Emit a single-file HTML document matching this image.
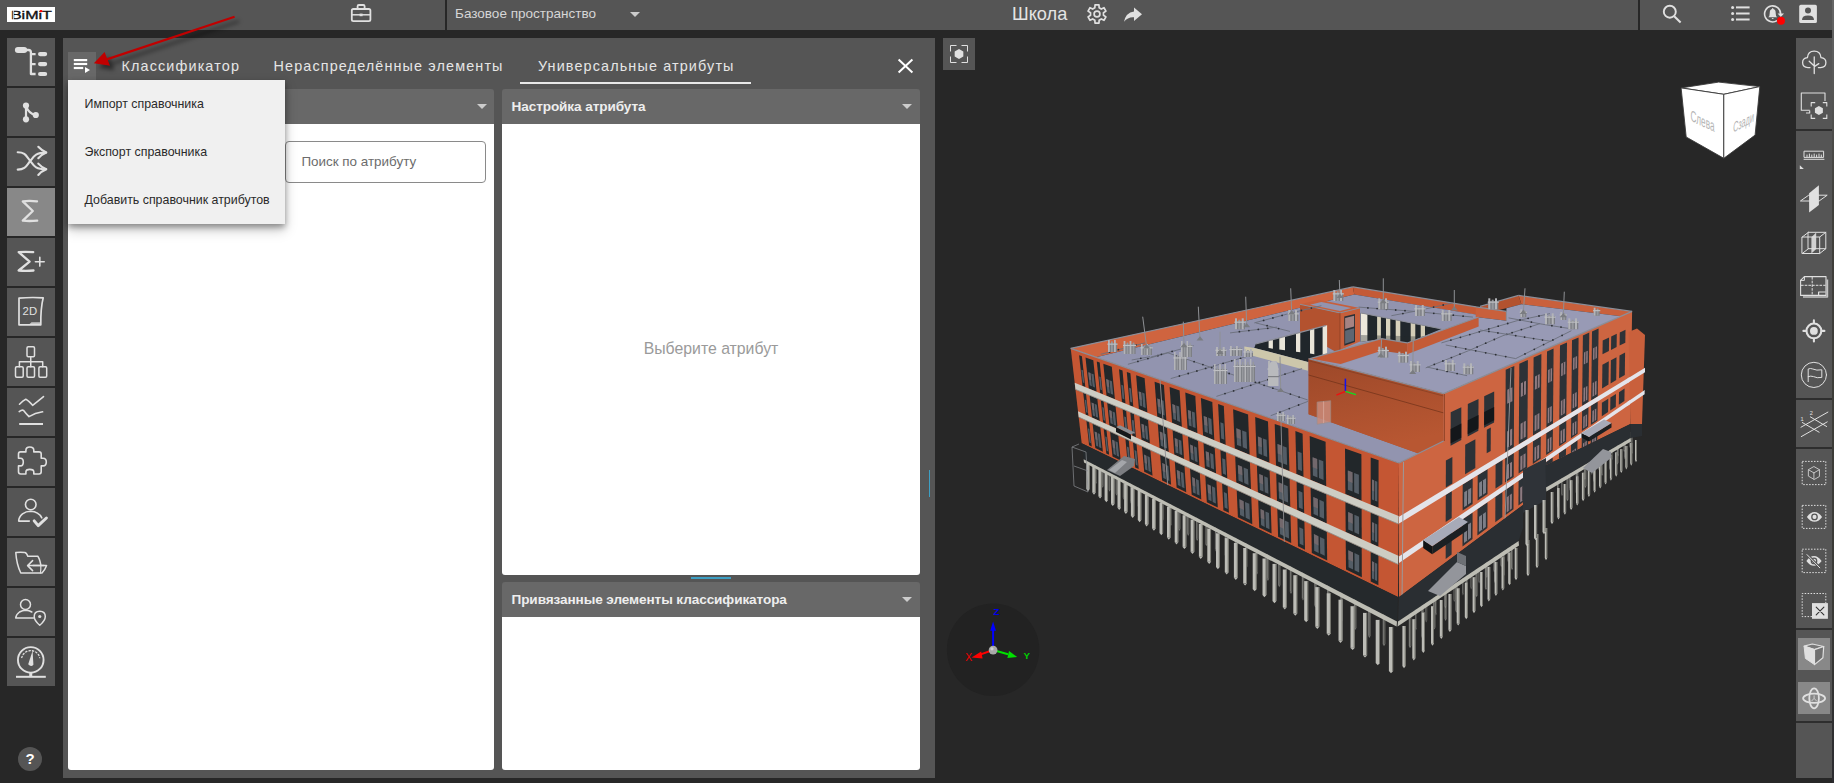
<!DOCTYPE html>
<html lang="ru">
<head>
<meta charset="utf-8">
<title>BiMiT</title>
<style>
*{box-sizing:border-box;margin:0;padding:0}
html,body{width:1834px;height:783px;overflow:hidden;background:#272727;font-family:"Liberation Sans",sans-serif;color:#ddd}
.abs{position:absolute}
#topbar{position:absolute;left:0;top:0;width:1832px;height:30px;background:#555}
#edge{position:absolute;left:1832px;top:0;width:2px;height:783px;background:linear-gradient(#666 0,#5c5c5c 60px,#403f3b 200px,#3a3a36 600px,#2b2b2f 783px)}
#logo{position:absolute;left:7px;top:7px;width:48px;height:15px;background:#fff;color:#111;font-weight:bold;font-size:13px;line-height:15px;text-align:center;letter-spacing:0.2px;overflow:hidden}
.vdiv{position:absolute;top:0;width:2px;height:30px;background:#272727}
#space{position:absolute;left:455px;top:5.3px;font-size:13.54px;line-height:18px;color:#d6d6d6;white-space:nowrap}
#proj{position:absolute;left:1012px;top:2.5px;font-size:18.2px;line-height:22px;color:#e4e4e4;white-space:nowrap}
.tri{position:absolute;width:0;height:0;border-left:5.5px solid transparent;border-right:5.5px solid transparent;border-top:5.5px solid #ccc}
svg{position:absolute;overflow:visible}
.sb{position:absolute;left:7px;width:48px;height:48px;background:#555}
.sb.on{background:#888}
.sb svg{left:0;top:0;width:48px;height:48px}
#panel{position:absolute;left:63px;top:38px;width:872px;height:740px;background:#555}
.tab{position:absolute;top:57px;font-size:14.4px;line-height:18px;letter-spacing:1.13px;color:#e6e6e6;white-space:nowrap}
.hdr{position:absolute;height:35px;background:#686868;border-radius:3px 3px 0 0;font-weight:bold;font-size:13.6px;line-height:35px;color:#eee;padding-left:9.5px;white-space:nowrap;letter-spacing:-0.1px}
.wh{position:absolute;background:#fff;border-radius:0 0 3px 3px}
#menu{position:absolute;left:68px;top:80px;width:217px;height:144px;background:#f0f0f0;box-shadow:0 3px 6px rgba(0,0,0,.35),0 6px 12px rgba(0,0,0,.22);color:#2a2a2a;font-size:12.4px}
#menu div{position:absolute;left:16.5px;line-height:16px;white-space:nowrap}
#rt{position:absolute;left:1796px;top:38px;width:36px;height:740px;background:#555}
.rsep{position:absolute;left:1796px;width:36px;height:2px;background:#2e2e2e}
.ron{position:absolute;left:1798px;width:32px;height:32px;background:#888}
</style>
</head>
<body>
<!-- top bar -->
<div id="topbar"></div>
<div id="edge"></div>
<div id="logo"></div>
<svg style="left:0;top:0;width:60px;height:30px" viewBox="0 0 60 30"><text x="10.9" y="18.9" font-family="Liberation Sans, sans-serif" font-size="11.7" fill="#111" stroke="#111" stroke-width="0.35" textLength="41" lengthAdjust="spacingAndGlyphs">BiMiT</text><rect x="12.9" y="9" width="0.8" height="11" fill="#fff"/><rect x="39.9" y="10.1" width="2.3" height="2" fill="#f00"/></svg>
<div class="vdiv" style="left:445px"></div>
<div class="vdiv" style="left:1638px"></div>
<div id="space">Базовое пространство</div>
<div class="tri" style="left:630px;top:12px"></div>
<div id="proj">Школа</div>

<svg style="left:0;top:0;width:1832px;height:30px" viewBox="0 0 1832 30" fill="none" stroke="#e0e0e0">
<!-- briefcase -->
<rect x="351.8" y="9" width="18.6" height="12.2" rx="1.6" stroke-width="1.8"/><path d="M357.6 9 V6.2 Q357.6 5 358.8 5 H363.4 Q364.6 5 364.6 6.2 V9" stroke-width="1.8"/><path d="M352 14.8 H370.2" stroke-width="1.5"/><rect x="359.6" y="13.6" width="3" height="2.6" fill="#e0e0e0" stroke="none"/>
<!-- gear -->
<g transform="translate(1097 14)"><path d="M-2.15 -6.24 L-1.95 -9.19 L1.95 -9.19 L2.15 -6.24 L4.33 -4.98 L6.99 -6.29 L8.94 -2.90 L6.48 -1.26 L6.48 1.26 L8.94 2.90 L6.99 6.29 L4.33 4.98 L2.15 6.24 L1.95 9.19 L-1.95 9.19 L-2.15 6.24 L-4.33 4.98 L-6.99 6.29 L-8.94 2.90 L-6.48 1.26 L-6.48 -1.26 L-8.94 -2.90 L-6.99 -6.29 L-4.33 -4.98 Z" stroke-width="1.7" stroke-linejoin="round"/><circle r="2.9" stroke-width="1.7"/></g>
<!-- share -->
<path d="M1134 7.4 L1142 14.2 L1134 21 V17.2 Q1128 16.6 1124 21.8 Q1125.6 12.6 1134 11.4 Z" fill="#e0e0e0" stroke="none"/>
<!-- search -->
<circle cx="1669.8" cy="11.7" r="6" stroke-width="1.9"/><path d="M1674.2 16.2 L1680.6 22.4" stroke-width="2.1"/>
<!-- list -->
<g fill="#e0e0e0" stroke="none"><circle cx="1732.6" cy="7.4" r="1.5"/><circle cx="1732.6" cy="13.5" r="1.5"/><circle cx="1732.6" cy="19.5" r="1.5"/><rect x="1736" y="6.4" width="13.6" height="2"/><rect x="1736" y="12.5" width="13.6" height="2"/><rect x="1736" y="18.5" width="13.6" height="2"/></g>
<!-- bell -->
<path d="M1780.6 13.9 A8 8 0 1 0 1777 20.6" stroke-width="1.6"/><path d="M1777.6 13.6 H1784 L1780.8 17 Z" fill="#e0e0e0" stroke="none"/>
<path d="M1768.3 17.3 Q1769.7 16.3 1769.7 13.2 Q1769.7 9.6 1772 9 Q1772.1 8 1772.7 8 Q1773.3 8 1773.4 9 Q1775.7 9.6 1775.7 13.2 Q1775.7 16.3 1777.1 17.3 Z M1771.7 18.1 H1773.7 Q1773.6 19 1772.7 19 Q1771.8 19 1771.7 18.1 Z" fill="#e0e0e0" stroke="none"/>
<circle cx="1781" cy="20.8" r="4" fill="#f00" stroke="none"/>
<!-- account -->
<rect x="1799.2" y="4.8" width="17.7" height="18.2" rx="1.6" fill="#e0e0e0" stroke="none"/><circle cx="1808" cy="10.4" r="3" fill="#555" stroke="none"/><path d="M1802 19.9 Q1802 15.6 1808 15.6 Q1814 15.6 1814 19.9 Z" fill="#555" stroke="none"/>
</svg>
<!-- left sidebar -->
<div class="sb" style="top:38px"><svg viewBox="0 0 48 48" fill="none" stroke="#e0e0e0" stroke-linecap="round" stroke-linejoin="round"><rect x="7.9" y="8.9" width="12.3" height="6.1" rx="3.05" fill="#e0e0e0" stroke="none"/>
<path d="M19 12 H21.5 Q23.9 12 23.9 14.5 V36 H28.6 M23.9 16.1 H28.6 M23.9 26.1 H28.6" stroke-width="2.3" stroke-linecap="butt"/>
<rect x="31" y="14" width="9.2" height="4.2" rx="2.1" fill="#e0e0e0" stroke="none"/>
<rect x="31" y="24" width="9.2" height="4.2" rx="2.1" fill="#e0e0e0" stroke="none"/>
<rect x="31" y="33.9" width="9.2" height="4.2" rx="2.1" fill="#e0e0e0" stroke="none"/></svg></div>
<div class="sb" style="top:88px"><svg viewBox="0 0 48 48" fill="none" stroke="#e0e0e0" stroke-linecap="round" stroke-linejoin="round"><circle cx="19" cy="17.5" r="3.1" fill="#e0e0e0" stroke="none"/><circle cx="19" cy="31.3" r="3.1" fill="#e0e0e0" stroke="none"/><circle cx="28.8" cy="27" r="3.1" fill="#e0e0e0" stroke="none"/>
<path d="M19 17.5 V31.3 M19.6 19 Q21 24.5 28.8 27.6" stroke-width="2.2"/></svg></div>
<div class="sb" style="top:138px"><svg viewBox="0 0 48 48" fill="none" stroke="#e0e0e0" stroke-linecap="round" stroke-linejoin="round"><path d="M10.7 14.3 C19 14.3 19.5 19 23.3 23 C27 28 28.5 31.3 39 31.3 M10.7 31.6 C19 31.6 19.5 27 23.3 23 C27 18 28.5 14.6 39 14.6" stroke-width="2.1"/>
<path d="M31.3 8.8 Q34.5 12.3 39.3 14.5 Q34.5 16.5 31.3 20.2 M31.3 25.6 Q34.5 29.2 39.3 31.3 Q34.5 33.3 31.3 37" stroke-width="2.1"/></svg></div>
<div class="sb on" style="top:188px"><svg viewBox="0 0 48 48" fill="none" stroke="#e0e0e0" stroke-linecap="round" stroke-linejoin="round"><path d="M30 13.3 Q22 12.6 15.8 13.3 L25.8 23 L15.8 32.7 Q22 33.3 30.2 32.7" stroke-width="2.3"/></svg></div>
<div class="sb" style="top:238px"><svg viewBox="0 0 48 48" fill="none" stroke="#e0e0e0" stroke-linecap="round" stroke-linejoin="round"><path d="M26.2 14.2 Q18.5 13.5 11.7 14.2 L22.6 23.6 L11.7 32.5 Q18.5 33.2 26.5 32.5" stroke-width="2.3"/><path d="M28.4 23.7 H37.2 M32.8 19.3 V28.1" stroke-width="1.6"/></svg></div>
<div class="sb" style="top:288px"><svg viewBox="0 0 48 48" fill="none" stroke="#e0e0e0" stroke-linecap="round" stroke-linejoin="round"><path d="M12 10.2 Q24 9 36.2 9.9 Q33.6 20 33.8 36.8 H12 Z" stroke-width="1.7"/><path d="M24.5 34.2 H33.2 V36.5 H22 Z" fill="#e0e0e0" stroke="none" opacity=".8"/>
<text x="15.6" y="27" font-family="Liberation Sans, sans-serif" font-size="11.5" fill="#e0e0e0" stroke="none" textLength="14.5" lengthAdjust="spacingAndGlyphs">2D</text></svg></div>
<div class="sb" style="top:338px"><svg viewBox="0 0 48 48" fill="none" stroke="#e0e0e0" stroke-linecap="round" stroke-linejoin="round"><g stroke-width="1.5"><rect x="20" y="8.8" width="7.5" height="10" rx="1.2"/><rect x="8.5" y="28.8" width="7.7" height="10.5" rx="1.2"/><rect x="20" y="28.8" width="7.5" height="10.5" rx="1.2"/><rect x="31.9" y="28.8" width="7.8" height="10.5" rx="1.2"/>
<path d="M23.75 18.8 V28.8 M12.4 28.8 V23.8 H35.7 V28.8"/></g></svg></div>
<div class="sb" style="top:388px"><svg viewBox="0 0 48 48" fill="none" stroke="#e0e0e0" stroke-linecap="round" stroke-linejoin="round"><path d="M12.5 16.2 Q16 12.5 18.8 11.2 Q21.5 12.5 25.6 17.3 Q30 14 36.5 8.6 M12.2 23.6 Q15 21.5 16.6 22.4 Q19 25.5 22 28.6 Q28 25 35.6 23.8" stroke-width="1.6"/><path d="M12.2 36 H36" stroke-width="2" stroke-linecap="butt"/></svg></div>
<div class="sb" style="top:438px"><svg viewBox="0 0 48 48" fill="none" stroke="#e0e0e0" stroke-linecap="round" stroke-linejoin="round"><path d="M13.5 13.9 H18.9 V12.3 Q18.9 9 22.8 9 Q26.8 9 26.8 12.3 V13.9 H32 Q34.2 13.9 34.2 16 V20.2 H36 Q39.3 20.2 39.3 24 Q39.3 27.9 36 27.9 H34.2 V33.8 Q34.2 36 32 36 H26.8 V34 Q26.8 31.4 22.8 31.4 Q18.9 31.4 18.9 34 V36 H13.7 Q11.5 36 11.5 33.8 V27.9 H13.5 Q16.3 27.9 16.3 24 Q16.3 20.2 13.5 20.2 H11.5 V16 Q11.5 13.9 13.5 13.9 Z" stroke-width="1.6"/></svg></div>
<div class="sb" style="top:488px"><svg viewBox="0 0 48 48" fill="none" stroke="#e0e0e0" stroke-linecap="round" stroke-linejoin="round"><circle cx="23.75" cy="16.5" r="5.3" stroke-width="1.6"/><path d="M22.3 33.1 H11.7 Q11.7 29 15.5 25.8 Q19 23.3 23.75 23.3 Q31.5 23.6 34.8 29.8" stroke-width="1.6"/><path d="M27.2 32.9 L31.2 37.6 L39.4 30" stroke-width="3" stroke-linecap="round"/></svg></div>
<div class="sb" style="top:538px"><svg viewBox="0 0 48 48" fill="none" stroke="#e0e0e0" stroke-linecap="round" stroke-linejoin="round"><path d="M33.8 26.6 Q32.5 20.5 30.8 18.3 H20.8 Q19.6 14.6 17.8 14.4 Q12 14 8.8 14.6 Q9.5 26 13.8 35 H35 Q38 32 39.6 27.6 H26" stroke-width="1.5"/><path d="M37 27.6 H21 M25.6 22.6 L20.6 27.6 L25.6 32.6" stroke-width="1.5"/><path d="M33.8 27.6 Q34 31.5 33.5 35" stroke-width="1.2"/></svg></div>
<div class="sb" style="top:588px"><svg viewBox="0 0 48 48" fill="none" stroke="#e0e0e0" stroke-linecap="round" stroke-linejoin="round"><circle cx="18.5" cy="16.5" r="5" stroke-width="1.5"/><path d="M26.5 30 H8.7 Q9 26.5 12.5 24 Q15.5 22.3 18.5 22.3 Q22.5 22.5 24.8 24" stroke-width="1.5"/><path d="M32.75 37.3 Q27.2 32.5 27.2 28.5 Q27.2 23.2 32.75 23.2 Q38.3 23.2 38.3 28.5 Q38.3 32.5 32.75 37.3 Z" stroke-width="1.5"/><circle cx="32.75" cy="28.5" r="1.6" fill="#e0e0e0" stroke="none"/></svg></div>
<div class="sb" style="top:638px"><svg viewBox="0 0 48 48" fill="none" stroke="#e0e0e0" stroke-linecap="round" stroke-linejoin="round"><circle cx="23.75" cy="21.9" r="12.8" stroke-width="1.9"/><path d="M21.2 26.3 L25.6 12.8 L26.4 26.8 Q24 29.5 21.2 26.3 Z" fill="#e0e0e0" stroke="none"/><circle cx="23.75" cy="21.9" r="9.3" stroke-width="1.3" stroke-dasharray="1.3 2.2" stroke-dashoffset="0" pathLength="58.4" style="clip-path:polygon(0 0,100% 0,100% 42%,0 42%)"/><path d="M23.75 34.7 V38.5" stroke-width="3" stroke-linecap="butt"/><path d="M9 38.8 H38.8" stroke-width="2" stroke-linecap="butt"/></svg></div>
<div class="abs" style="left:18px;top:747px;width:24px;height:24px;border-radius:12px;background:#555;color:#fff;font-weight:bold;font-size:15px;line-height:24px;text-align:center">?</div>

<!-- main panel -->
<div id="panel"></div>
<div class="abs" style="left:68px;top:52px;width:28px;height:28px;background:#686868"></div>
<div class="tab" style="left:121.5px">Классификатор</div>
<div class="tab" style="left:273.5px">Нераспределённые элементы</div>
<div class="tab" style="left:538px">Универсальные атрибуты</div>
<div class="abs" style="left:520px;top:82px;width:231px;height:2px;background:#e8e8e8"></div>

<div class="hdr" style="left:68px;top:89px;width:426px"></div>
<div class="wh" style="left:68px;top:124px;width:426px;height:646px"></div>
<div class="tri" style="left:476.5px;top:104px"></div>
<div class="abs" style="left:285px;top:141px;width:201px;height:42px;border:1px solid #8a8a8a;border-radius:4px;background:#fff;color:#6c6c6c;font-size:13.43px;line-height:40px;padding-left:15.4px;white-space:nowrap">Поиск по атрибуту</div>

<div class="hdr" style="left:502px;top:89px;width:418px">Настройка атрибута</div>
<div class="wh" style="left:502px;top:124px;width:418px;height:451px"></div>
<div class="tri" style="left:902px;top:104px"></div>
<div class="abs" style="left:502px;top:339.1px;width:418px;text-align:center;font-size:15.82px;line-height:20px;color:#9a9a9a">Выберите атрибут</div>
<div class="abs" style="left:691px;top:577px;width:40px;height:2px;background:#3d9fc4"></div>
<div class="hdr" style="left:502px;top:582px;width:418px">Привязанные элементы классификатора</div>
<div class="wh" style="left:502px;top:617px;width:418px;height:153px"></div>
<div class="tri" style="left:902px;top:597px"></div>
<div class="abs" style="left:929px;top:470px;width:1px;height:27px;background:#3d9fc4"></div>

<!-- dropdown menu -->
<div id="menu">
<div style="top:15.6px">Импорт справочника</div>
<div style="top:63.6px">Экспорт справочника</div>
<div style="top:111.6px">Добавить справочник атрибутов</div>
</div>

<!-- viewer -->
<div class="abs" style="left:943px;top:38px;width:32px;height:32px;background:#555"></div>
<svg style="left:0;top:0;width:1834px;height:783px" viewBox="0 0 1834 783" fill="none">
<!-- menu icon -->
<g fill="#fff"><rect x="73.8" y="59" width="13.4" height="2.2"/><rect x="73.8" y="62.9" width="13.4" height="2.2"/><rect x="73.8" y="66.9" width="9.4" height="2.2"/><path d="M85 67.1 L90 70.1 L85 73.1 Z"/></g>
<!-- close -->
<path d="M898.6 59.6 L912.4 72.4 M912.4 59.6 L898.6 72.4" stroke="#fff" stroke-width="2"/>
<!-- viewer focus button -->
<path d="M950.5 51.5 V45.5 H956.5 M961.5 45.5 H967.5 V51.5 M967.5 56.5 V62.5 H961.5 M956.5 62.5 H950.5 V56.5" stroke="#e0e0e0" stroke-width="1"/><polygon points="959.00,59.00 954.67,56.50 954.67,51.50 959.00,49.00 963.33,51.50 963.33,56.50" fill="#e0e0e0"/>
</svg>
<!--B0--><svg style="left:0;top:0;width:1834px;height:783px" viewBox="0 0 1834 783" fill="none" shape-rendering="geometricPrecision">
<g opacity=".5"><rect x="1095.1" y="464.0" width="1.8" height="18.0" fill="#bcbcb6"/><rect x="1096.0" y="464.0" width="0.9" height="18.0" fill="#6f6f68"/><polygon points="1095.1,482.0 1096.9,482.0 1096.0,484.2" fill="#bcbcb6"/><rect x="1101.8" y="467.4" width="1.8" height="18.3" fill="#bcbcb6"/><rect x="1102.7" y="467.4" width="0.9" height="18.3" fill="#6f6f68"/><polygon points="1101.8,485.8 1103.6,485.8 1102.7,488.0" fill="#bcbcb6"/><rect x="1108.6" y="471.0" width="1.8" height="18.7" fill="#bcbcb6"/><rect x="1109.6" y="471.0" width="0.9" height="18.7" fill="#6f6f68"/><polygon points="1108.6,489.6 1110.5,489.6 1109.6,491.8" fill="#bcbcb6"/><rect x="1115.6" y="474.6" width="1.9" height="19.0" fill="#bcbcb6"/><rect x="1116.6" y="474.6" width="0.9" height="19.0" fill="#6f6f68"/><polygon points="1115.6,493.6 1117.5,493.6 1116.6,495.8" fill="#bcbcb6"/><rect x="1122.8" y="478.3" width="1.9" height="19.3" fill="#bcbcb6"/><rect x="1123.8" y="478.3" width="0.9" height="19.3" fill="#6f6f68"/><polygon points="1122.8,497.6 1124.7,497.6 1123.8,499.8" fill="#bcbcb6"/><rect x="1130.2" y="482.0" width="1.9" height="19.7" fill="#bcbcb6"/><rect x="1131.2" y="482.0" width="0.9" height="19.7" fill="#6f6f68"/><polygon points="1130.2,501.8 1132.1,501.8 1131.1,504.0" fill="#bcbcb6"/><rect x="1137.7" y="485.9" width="1.9" height="20.1" fill="#bcbcb6"/><rect x="1138.7" y="485.9" width="0.9" height="20.1" fill="#6f6f68"/><polygon points="1137.7,506.0 1139.6,506.0 1138.7,508.2" fill="#bcbcb6"/><rect x="1145.4" y="489.9" width="1.9" height="20.4" fill="#bcbcb6"/><rect x="1146.5" y="489.9" width="0.9" height="20.4" fill="#6f6f68"/><polygon points="1145.4,510.3 1147.4,510.3 1146.4,512.5" fill="#bcbcb6"/><rect x="1153.3" y="494.0" width="2.0" height="20.8" fill="#bcbcb6"/><rect x="1154.4" y="494.0" width="0.9" height="20.8" fill="#6f6f68"/><polygon points="1153.3,514.8 1155.3,514.8 1154.3,517.0" fill="#bcbcb6"/><rect x="1161.5" y="498.2" width="2.0" height="21.2" fill="#bcbcb6"/><rect x="1162.6" y="498.2" width="0.9" height="21.2" fill="#6f6f68"/><polygon points="1161.5,519.4 1163.5,519.4 1162.5,521.6" fill="#bcbcb6"/><rect x="1169.8" y="502.4" width="2.0" height="21.6" fill="#bcbcb6"/><rect x="1170.9" y="502.4" width="0.9" height="21.6" fill="#6f6f68"/><polygon points="1169.8,524.1 1171.8,524.1 1170.8,526.3" fill="#bcbcb6"/><rect x="1178.4" y="506.8" width="2.0" height="22.1" fill="#bcbcb6"/><rect x="1179.5" y="506.8" width="0.9" height="22.1" fill="#6f6f68"/><polygon points="1178.4,528.9 1180.4,528.9 1179.4,531.1" fill="#bcbcb6"/><rect x="1187.1" y="511.4" width="2.1" height="22.5" fill="#bcbcb6"/><rect x="1188.3" y="511.4" width="0.9" height="22.5" fill="#6f6f68"/><polygon points="1187.1,533.8 1189.2,533.8 1188.2,536.0" fill="#bcbcb6"/><rect x="1196.1" y="516.0" width="2.1" height="22.9" fill="#bcbcb6"/><rect x="1197.3" y="516.0" width="0.9" height="22.9" fill="#6f6f68"/><polygon points="1196.1,538.9 1198.2,538.9 1197.2,541.1" fill="#bcbcb6"/><rect x="1205.4" y="520.8" width="2.1" height="23.4" fill="#bcbcb6"/><rect x="1206.6" y="520.8" width="0.9" height="23.4" fill="#6f6f68"/><polygon points="1205.4,544.1 1207.5,544.1 1206.5,546.3" fill="#bcbcb6"/><rect x="1214.9" y="525.7" width="2.1" height="23.8" fill="#bcbcb6"/><rect x="1216.2" y="525.7" width="0.9" height="23.8" fill="#6f6f68"/><polygon points="1214.9,549.5 1217.1,549.5 1216.0,551.7" fill="#bcbcb6"/><rect x="1224.7" y="530.7" width="2.2" height="24.3" fill="#bcbcb6"/><rect x="1226.0" y="530.7" width="0.9" height="24.3" fill="#6f6f68"/><polygon points="1224.7,555.0 1226.9,555.0 1225.8,557.2" fill="#bcbcb6"/><rect x="1234.8" y="535.9" width="2.2" height="24.8" fill="#bcbcb6"/><rect x="1236.1" y="535.9" width="0.9" height="24.8" fill="#6f6f68"/><polygon points="1234.8,560.7 1237.0,560.7 1235.9,562.9" fill="#bcbcb6"/><rect x="1245.2" y="541.2" width="2.2" height="25.3" fill="#bcbcb6"/><rect x="1246.5" y="541.2" width="0.9" height="25.3" fill="#6f6f68"/><polygon points="1245.2,566.5 1247.4,566.5 1246.3,568.7" fill="#bcbcb6"/><rect x="1255.8" y="546.7" width="2.2" height="25.8" fill="#bcbcb6"/><rect x="1257.2" y="546.7" width="0.9" height="25.8" fill="#6f6f68"/><polygon points="1255.8,572.5 1258.1,572.5 1256.9,574.7" fill="#bcbcb6"/><rect x="1266.8" y="552.4" width="2.3" height="26.4" fill="#bcbcb6"/><rect x="1268.2" y="552.4" width="0.9" height="26.4" fill="#6f6f68"/><polygon points="1266.8,578.7 1269.1,578.7 1267.9,580.9" fill="#bcbcb6"/><rect x="1278.1" y="558.2" width="2.3" height="26.9" fill="#bcbcb6"/><rect x="1279.5" y="558.2" width="0.9" height="26.9" fill="#6f6f68"/><polygon points="1278.1,585.1 1280.4,585.1 1279.3,587.3" fill="#bcbcb6"/><rect x="1289.8" y="564.2" width="2.3" height="27.5" fill="#bcbcb6"/><rect x="1291.2" y="564.2" width="0.9" height="27.5" fill="#6f6f68"/><polygon points="1289.8,591.7 1292.1,591.7 1291.0,593.9" fill="#bcbcb6"/><rect x="1301.8" y="570.4" width="2.4" height="28.1" fill="#bcbcb6"/><rect x="1303.3" y="570.4" width="0.9" height="28.1" fill="#6f6f68"/><polygon points="1301.8,598.4 1304.2,598.4 1303.0,600.6" fill="#bcbcb6"/><rect x="1314.2" y="576.8" width="2.4" height="28.7" fill="#bcbcb6"/><rect x="1315.7" y="576.8" width="0.9" height="28.7" fill="#6f6f68"/><polygon points="1314.2,605.4 1316.6,605.4 1315.4,607.6" fill="#bcbcb6"/><rect x="1327.0" y="583.4" width="2.4" height="29.3" fill="#bcbcb6"/><rect x="1328.6" y="583.4" width="0.9" height="29.3" fill="#6f6f68"/><polygon points="1327.0,612.6 1329.5,612.6 1328.3,614.8" fill="#bcbcb6"/><rect x="1340.3" y="590.2" width="2.5" height="29.9" fill="#bcbcb6"/><rect x="1341.8" y="590.2" width="0.9" height="29.9" fill="#6f6f68"/><polygon points="1340.3,620.1 1342.7,620.1 1341.5,622.3" fill="#bcbcb6"/><rect x="1353.9" y="597.2" width="2.5" height="30.6" fill="#bcbcb6"/><rect x="1355.6" y="597.2" width="0.9" height="30.6" fill="#6f6f68"/><polygon points="1353.9,627.8 1356.5,627.8 1355.2,630.0" fill="#bcbcb6"/><rect x="1368.1" y="604.5" width="2.6" height="31.3" fill="#bcbcb6"/><rect x="1369.7" y="604.5" width="0.9" height="31.3" fill="#6f6f68"/><polygon points="1368.1,635.8 1370.6,635.8 1369.4,638.0" fill="#bcbcb6"/><rect x="1382.7" y="612.0" width="2.6" height="32.0" fill="#bcbcb6"/><rect x="1384.4" y="612.0" width="0.9" height="32.0" fill="#6f6f68"/><polygon points="1382.7,644.0 1385.3,644.0 1384.0,646.2" fill="#bcbcb6"/></g>
<rect x="1086.3" y="463.0" width="3.4" height="26.0" fill="#bcbcb6"/><rect x="1088.8" y="463.0" width="0.9" height="26.0" fill="#6f6f68"/><polygon points="1086.3,489.0 1089.7,489.0 1088.0,491.2" fill="#bcbcb6"/><rect x="1092.3" y="466.2" width="3.4" height="26.4" fill="#bcbcb6"/><rect x="1094.8" y="466.2" width="0.9" height="26.4" fill="#6f6f68"/><polygon points="1092.3,492.6 1095.7,492.6 1094.0,494.8" fill="#bcbcb6"/><rect x="1098.4" y="469.6" width="3.4" height="26.7" fill="#bcbcb6"/><rect x="1100.9" y="469.6" width="0.9" height="26.7" fill="#6f6f68"/><polygon points="1098.4,496.3 1101.8,496.3 1100.1,498.5" fill="#bcbcb6"/><rect x="1104.6" y="472.9" width="3.4" height="27.1" fill="#bcbcb6"/><rect x="1107.2" y="472.9" width="0.9" height="27.1" fill="#6f6f68"/><polygon points="1104.6,500.0 1108.1,500.0 1106.4,502.2" fill="#bcbcb6"/><rect x="1111.0" y="476.4" width="3.5" height="27.5" fill="#bcbcb6"/><rect x="1113.6" y="476.4" width="0.9" height="27.5" fill="#6f6f68"/><polygon points="1111.0,503.9 1114.5,503.9 1112.7,506.1" fill="#bcbcb6"/><rect x="1117.5" y="479.9" width="3.5" height="27.9" fill="#bcbcb6"/><rect x="1120.1" y="479.9" width="0.9" height="27.9" fill="#6f6f68"/><polygon points="1117.5,507.8 1121.0,507.8 1119.2,510.0" fill="#bcbcb6"/><rect x="1124.1" y="483.5" width="3.5" height="28.2" fill="#bcbcb6"/><rect x="1126.7" y="483.5" width="0.9" height="28.2" fill="#6f6f68"/><polygon points="1124.1,511.8 1127.6,511.8 1125.9,514.0" fill="#bcbcb6"/><rect x="1130.9" y="487.2" width="3.5" height="28.7" fill="#bcbcb6"/><rect x="1133.5" y="487.2" width="0.9" height="28.7" fill="#6f6f68"/><polygon points="1130.9,515.8 1134.4,515.8 1132.7,518.0" fill="#bcbcb6"/><rect x="1137.8" y="490.9" width="3.5" height="29.1" fill="#bcbcb6"/><rect x="1140.4" y="490.9" width="0.9" height="29.1" fill="#6f6f68"/><polygon points="1137.8,520.0 1141.3,520.0 1139.6,522.2" fill="#bcbcb6"/><rect x="1144.9" y="494.7" width="3.6" height="29.5" fill="#bcbcb6"/><rect x="1147.5" y="494.7" width="0.9" height="29.5" fill="#6f6f68"/><polygon points="1144.9,524.2 1148.4,524.2 1146.6,526.4" fill="#bcbcb6"/><rect x="1152.1" y="498.7" width="3.6" height="29.9" fill="#bcbcb6"/><rect x="1154.8" y="498.7" width="0.9" height="29.9" fill="#6f6f68"/><polygon points="1152.1,528.6 1155.7,528.6 1153.9,530.8" fill="#bcbcb6"/><rect x="1159.5" y="502.6" width="3.6" height="30.4" fill="#bcbcb6"/><rect x="1162.1" y="502.6" width="0.9" height="30.4" fill="#6f6f68"/><polygon points="1159.5,533.0 1163.0,533.0 1161.3,535.2" fill="#bcbcb6"/><rect x="1167.0" y="506.7" width="3.6" height="30.8" fill="#bcbcb6"/><rect x="1169.7" y="506.7" width="0.9" height="30.8" fill="#6f6f68"/><polygon points="1167.0,537.5 1170.6,537.5 1168.8,539.7" fill="#bcbcb6"/><rect x="1174.7" y="510.9" width="3.6" height="31.3" fill="#bcbcb6"/><rect x="1177.4" y="510.9" width="0.9" height="31.3" fill="#6f6f68"/><polygon points="1174.7,542.2 1178.3,542.2 1176.5,544.4" fill="#bcbcb6"/><rect x="1182.6" y="515.2" width="3.7" height="31.7" fill="#bcbcb6"/><rect x="1185.3" y="515.2" width="0.9" height="31.7" fill="#6f6f68"/><polygon points="1182.6,546.9 1186.2,546.9 1184.4,549.1" fill="#bcbcb6"/><rect x="1190.6" y="519.6" width="3.7" height="32.2" fill="#bcbcb6"/><rect x="1193.4" y="519.6" width="0.9" height="32.2" fill="#6f6f68"/><polygon points="1190.6,551.8 1194.3,551.8 1192.5,554.0" fill="#bcbcb6"/><rect x="1198.9" y="524.0" width="3.7" height="32.7" fill="#bcbcb6"/><rect x="1201.7" y="524.0" width="0.9" height="32.7" fill="#6f6f68"/><polygon points="1198.9,556.7 1202.6,556.7 1200.7,558.9" fill="#bcbcb6"/><rect x="1207.3" y="528.6" width="3.7" height="33.2" fill="#bcbcb6"/><rect x="1210.2" y="528.6" width="0.9" height="33.2" fill="#6f6f68"/><polygon points="1207.3,561.8 1211.1,561.8 1209.2,564.0" fill="#bcbcb6"/><rect x="1216.0" y="533.3" width="3.7" height="33.7" fill="#bcbcb6"/><rect x="1218.8" y="533.3" width="0.9" height="33.7" fill="#6f6f68"/><polygon points="1216.0,567.0 1219.7,567.0 1217.9,569.2" fill="#bcbcb6"/><rect x="1224.8" y="538.1" width="3.8" height="34.2" fill="#bcbcb6"/><rect x="1227.7" y="538.1" width="0.9" height="34.2" fill="#6f6f68"/><polygon points="1224.8,572.3 1228.6,572.3 1226.7,574.5" fill="#bcbcb6"/><rect x="1233.9" y="543.0" width="3.8" height="34.8" fill="#bcbcb6"/><rect x="1236.8" y="543.0" width="0.9" height="34.8" fill="#6f6f68"/><polygon points="1233.9,577.8 1237.7,577.8 1235.8,580.0" fill="#bcbcb6"/><rect x="1243.2" y="548.0" width="3.8" height="35.3" fill="#bcbcb6"/><rect x="1246.1" y="548.0" width="0.9" height="35.3" fill="#6f6f68"/><polygon points="1243.2,583.4 1247.0,583.4 1245.1,585.6" fill="#bcbcb6"/><rect x="1252.7" y="553.2" width="3.8" height="35.9" fill="#bcbcb6"/><rect x="1255.7" y="553.2" width="0.9" height="35.9" fill="#6f6f68"/><polygon points="1252.7,589.1 1256.6,589.1 1254.7,591.3" fill="#bcbcb6"/><rect x="1262.5" y="558.5" width="3.9" height="36.5" fill="#bcbcb6"/><rect x="1265.5" y="558.5" width="0.9" height="36.5" fill="#6f6f68"/><polygon points="1262.5,595.0 1266.4,595.0 1264.4,597.2" fill="#bcbcb6"/><rect x="1272.5" y="563.9" width="3.9" height="37.1" fill="#bcbcb6"/><rect x="1275.5" y="563.9" width="0.9" height="37.1" fill="#6f6f68"/><polygon points="1272.5,601.0 1276.4,601.0 1274.5,603.2" fill="#bcbcb6"/><rect x="1282.8" y="569.5" width="3.9" height="37.7" fill="#bcbcb6"/><rect x="1285.8" y="569.5" width="0.9" height="37.7" fill="#6f6f68"/><polygon points="1282.8,607.2 1286.7,607.2 1284.8,609.4" fill="#bcbcb6"/><rect x="1293.3" y="575.2" width="3.9" height="38.3" fill="#bcbcb6"/><rect x="1296.4" y="575.2" width="0.9" height="38.3" fill="#6f6f68"/><polygon points="1293.3,613.5 1297.3,613.5 1295.3,615.7" fill="#bcbcb6"/><rect x="1304.2" y="581.1" width="4.0" height="39.0" fill="#bcbcb6"/><rect x="1307.2" y="581.1" width="0.9" height="39.0" fill="#6f6f68"/><polygon points="1304.2,620.0 1308.1,620.0 1306.2,622.2" fill="#bcbcb6"/><rect x="1315.3" y="587.1" width="4.0" height="39.6" fill="#bcbcb6"/><rect x="1318.4" y="587.1" width="0.9" height="39.6" fill="#6f6f68"/><polygon points="1315.3,626.7 1319.3,626.7 1317.3,628.9" fill="#bcbcb6"/><rect x="1326.7" y="593.3" width="4.0" height="40.3" fill="#bcbcb6"/><rect x="1329.9" y="593.3" width="0.9" height="40.3" fill="#6f6f68"/><polygon points="1326.7,633.6 1330.8,633.6 1328.7,635.8" fill="#bcbcb6"/><rect x="1338.5" y="599.7" width="4.1" height="41.0" fill="#bcbcb6"/><rect x="1341.6" y="599.7" width="0.9" height="41.0" fill="#6f6f68"/><polygon points="1338.5,640.7 1342.5,640.7 1340.5,642.9" fill="#bcbcb6"/><rect x="1350.5" y="606.2" width="4.1" height="41.7" fill="#bcbcb6"/><rect x="1353.7" y="606.2" width="0.9" height="41.7" fill="#6f6f68"/><polygon points="1350.5,647.9 1354.6,647.9 1352.6,650.1" fill="#bcbcb6"/><rect x="1363.0" y="612.9" width="4.1" height="42.5" fill="#bcbcb6"/><rect x="1366.2" y="612.9" width="0.9" height="42.5" fill="#6f6f68"/><polygon points="1363.0,655.4 1367.1,655.4 1365.0,657.6" fill="#bcbcb6"/><rect x="1375.7" y="619.9" width="4.2" height="43.2" fill="#bcbcb6"/><rect x="1379.0" y="619.9" width="0.9" height="43.2" fill="#6f6f68"/><polygon points="1375.7,663.1 1379.9,663.1 1377.8,665.3" fill="#bcbcb6"/><rect x="1388.9" y="627.0" width="4.2" height="44.0" fill="#bcbcb6"/><rect x="1392.2" y="627.0" width="0.9" height="44.0" fill="#6f6f68"/><polygon points="1388.9,671.0 1393.1,671.0 1391.0,673.2" fill="#bcbcb6"/>
<g opacity=".55"><rect x="1408.8" y="612.0" width="2.4" height="34.0" fill="#bcbcb6"/><rect x="1410.3" y="612.0" width="0.9" height="34.0" fill="#6f6f68"/><polygon points="1408.8,646.0 1411.2,646.0 1410.0,648.2" fill="#bcbcb6"/><rect x="1421.3" y="603.5" width="2.4" height="33.0" fill="#bcbcb6"/><rect x="1422.7" y="603.5" width="0.9" height="33.0" fill="#6f6f68"/><polygon points="1421.3,636.5 1423.6,636.5 1422.4,638.7" fill="#bcbcb6"/><rect x="1433.1" y="595.3" width="2.3" height="32.1" fill="#bcbcb6"/><rect x="1434.5" y="595.3" width="0.9" height="32.1" fill="#6f6f68"/><polygon points="1433.1,627.4 1435.4,627.4 1434.3,629.6" fill="#bcbcb6"/><rect x="1444.5" y="587.6" width="2.3" height="31.2" fill="#bcbcb6"/><rect x="1445.8" y="587.6" width="0.9" height="31.2" fill="#6f6f68"/><polygon points="1444.5,618.8 1446.7,618.8 1445.6,621.0" fill="#bcbcb6"/><rect x="1455.3" y="580.2" width="2.2" height="30.4" fill="#bcbcb6"/><rect x="1456.6" y="580.2" width="0.9" height="30.4" fill="#6f6f68"/><polygon points="1455.3,610.5 1457.5,610.5 1456.4,612.7" fill="#bcbcb6"/><rect x="1465.6" y="573.1" width="2.2" height="29.6" fill="#bcbcb6"/><rect x="1466.9" y="573.1" width="0.9" height="29.6" fill="#6f6f68"/><polygon points="1465.6,602.7 1467.8,602.7 1466.7,604.9" fill="#bcbcb6"/><rect x="1475.5" y="566.3" width="2.1" height="28.8" fill="#bcbcb6"/><rect x="1476.7" y="566.3" width="0.9" height="28.8" fill="#6f6f68"/><polygon points="1475.5,595.1 1477.6,595.1 1476.5,597.3" fill="#bcbcb6"/><rect x="1484.9" y="559.9" width="2.1" height="28.0" fill="#bcbcb6"/><rect x="1486.1" y="559.9" width="0.9" height="28.0" fill="#6f6f68"/><polygon points="1484.9,587.9 1487.0,587.9 1486.0,590.1" fill="#bcbcb6"/><rect x="1494.0" y="553.7" width="2.1" height="27.3" fill="#bcbcb6"/><rect x="1495.1" y="553.7" width="0.9" height="27.3" fill="#6f6f68"/><polygon points="1494.0,581.0 1496.0,581.0 1495.0,583.2" fill="#bcbcb6"/><rect x="1502.7" y="547.7" width="2.0" height="26.7" fill="#bcbcb6"/><rect x="1503.8" y="547.7" width="0.9" height="26.7" fill="#6f6f68"/><polygon points="1502.7,574.4 1504.7,574.4 1503.7,576.6" fill="#bcbcb6"/><rect x="1511.0" y="542.0" width="2.0" height="26.0" fill="#bcbcb6"/><rect x="1512.1" y="542.0" width="0.9" height="26.0" fill="#6f6f68"/><polygon points="1511.0,568.0 1513.0,568.0 1512.0,570.2" fill="#bcbcb6"/></g>
<g opacity=".4"><rect x="1415.0" y="600.0" width="2.0" height="28.0" fill="#bcbcb6"/><rect x="1416.1" y="600.0" width="0.9" height="28.0" fill="#6f6f68"/><polygon points="1415.0,628.0 1417.0,628.0 1416.0,630.2" fill="#bcbcb6"/><rect x="1425.2" y="593.1" width="2.0" height="27.3" fill="#bcbcb6"/><rect x="1426.3" y="593.1" width="0.9" height="27.3" fill="#6f6f68"/><polygon points="1425.2,620.4 1427.2,620.4 1426.2,622.6" fill="#bcbcb6"/><rect x="1435.0" y="586.5" width="2.0" height="26.7" fill="#bcbcb6"/><rect x="1436.1" y="586.5" width="0.9" height="26.7" fill="#6f6f68"/><polygon points="1435.0,613.2 1437.0,613.2 1436.0,615.4" fill="#bcbcb6"/><rect x="1444.4" y="580.2" width="1.9" height="26.1" fill="#bcbcb6"/><rect x="1445.4" y="580.2" width="0.9" height="26.1" fill="#6f6f68"/><polygon points="1444.4,606.3 1446.3,606.3 1445.4,608.5" fill="#bcbcb6"/><rect x="1453.4" y="574.2" width="1.9" height="25.5" fill="#bcbcb6"/><rect x="1454.4" y="574.2" width="0.9" height="25.5" fill="#6f6f68"/><polygon points="1453.4,599.7 1455.3,599.7 1454.3,601.9" fill="#bcbcb6"/><rect x="1462.0" y="568.4" width="1.9" height="24.9" fill="#bcbcb6"/><rect x="1463.0" y="568.4" width="0.9" height="24.9" fill="#6f6f68"/><polygon points="1462.0,593.3 1463.9,593.3 1462.9,595.5" fill="#bcbcb6"/><rect x="1470.3" y="562.8" width="1.9" height="24.4" fill="#bcbcb6"/><rect x="1471.2" y="562.8" width="0.9" height="24.4" fill="#6f6f68"/><polygon points="1470.3,587.2 1472.1,587.2 1471.2,589.4" fill="#bcbcb6"/><rect x="1478.2" y="557.5" width="1.9" height="23.9" fill="#bcbcb6"/><rect x="1479.2" y="557.5" width="0.9" height="23.9" fill="#6f6f68"/><polygon points="1478.2,581.3 1480.1,581.3 1479.1,583.5" fill="#bcbcb6"/><rect x="1485.8" y="552.3" width="1.8" height="23.4" fill="#bcbcb6"/><rect x="1486.8" y="552.3" width="0.9" height="23.4" fill="#6f6f68"/><polygon points="1485.8,575.7 1487.7,575.7 1486.8,577.9" fill="#bcbcb6"/><rect x="1493.2" y="547.4" width="1.8" height="22.9" fill="#bcbcb6"/><rect x="1494.1" y="547.4" width="0.9" height="22.9" fill="#6f6f68"/><polygon points="1493.2,570.3 1495.0,570.3 1494.1,572.5" fill="#bcbcb6"/><rect x="1500.3" y="542.6" width="1.8" height="22.4" fill="#bcbcb6"/><rect x="1501.2" y="542.6" width="0.9" height="22.4" fill="#6f6f68"/><polygon points="1500.3,565.0 1502.1,565.0 1501.2,567.2" fill="#bcbcb6"/><rect x="1507.1" y="538.0" width="1.8" height="22.0" fill="#bcbcb6"/><rect x="1508.0" y="538.0" width="0.9" height="22.0" fill="#6f6f68"/><polygon points="1507.1,560.0 1508.9,560.0 1508.0,562.2" fill="#bcbcb6"/></g>
<rect x="1402.4" y="626.0" width="3.2" height="40.0" fill="#bcbcb6"/><rect x="1404.7" y="626.0" width="0.9" height="40.0" fill="#6f6f68"/><polygon points="1402.4,666.0 1405.6,666.0 1404.0,668.2" fill="#bcbcb6"/><rect x="1412.3" y="619.2" width="3.1" height="39.1" fill="#bcbcb6"/><rect x="1414.5" y="619.2" width="0.9" height="39.1" fill="#6f6f68"/><polygon points="1412.3,658.3 1415.4,658.3 1413.8,660.5" fill="#bcbcb6"/><rect x="1421.8" y="612.6" width="3.1" height="38.3" fill="#bcbcb6"/><rect x="1424.0" y="612.6" width="0.9" height="38.3" fill="#6f6f68"/><polygon points="1421.8,650.8 1424.9,650.8 1423.3,653.0" fill="#bcbcb6"/><rect x="1431.0" y="606.2" width="3.0" height="37.5" fill="#bcbcb6"/><rect x="1433.1" y="606.2" width="0.9" height="37.5" fill="#6f6f68"/><polygon points="1431.0,643.6 1434.0,643.6 1432.5,645.8" fill="#bcbcb6"/><rect x="1439.8" y="600.0" width="3.0" height="36.7" fill="#bcbcb6"/><rect x="1441.9" y="600.0" width="0.9" height="36.7" fill="#6f6f68"/><polygon points="1439.8,636.7 1442.8,636.7 1441.3,638.9" fill="#bcbcb6"/><rect x="1448.4" y="594.0" width="3.0" height="35.9" fill="#bcbcb6"/><rect x="1450.5" y="594.0" width="0.9" height="35.9" fill="#6f6f68"/><polygon points="1448.4,629.9 1451.4,629.9 1449.9,632.1" fill="#bcbcb6"/><rect x="1456.7" y="588.3" width="2.9" height="35.2" fill="#bcbcb6"/><rect x="1458.7" y="588.3" width="0.9" height="35.2" fill="#6f6f68"/><polygon points="1456.7,623.4 1459.6,623.4 1458.2,625.6" fill="#bcbcb6"/><rect x="1464.8" y="582.7" width="2.9" height="34.4" fill="#bcbcb6"/><rect x="1466.8" y="582.7" width="0.9" height="34.4" fill="#6f6f68"/><polygon points="1464.8,617.1 1467.7,617.1 1466.2,619.3" fill="#bcbcb6"/><rect x="1472.6" y="577.2" width="2.8" height="33.8" fill="#bcbcb6"/><rect x="1474.5" y="577.2" width="0.9" height="33.8" fill="#6f6f68"/><polygon points="1472.6,611.0 1475.4,611.0 1474.0,613.2" fill="#bcbcb6"/><rect x="1480.1" y="572.0" width="2.8" height="33.1" fill="#bcbcb6"/><rect x="1482.0" y="572.0" width="0.9" height="33.1" fill="#6f6f68"/><polygon points="1480.1,605.1 1482.9,605.1 1481.5,607.3" fill="#bcbcb6"/><rect x="1487.5" y="566.9" width="2.7" height="32.4" fill="#bcbcb6"/><rect x="1489.3" y="566.9" width="0.9" height="32.4" fill="#6f6f68"/><polygon points="1487.5,599.3 1490.2,599.3 1488.8,601.5" fill="#bcbcb6"/><rect x="1494.6" y="562.0" width="2.7" height="31.8" fill="#bcbcb6"/><rect x="1496.4" y="562.0" width="0.9" height="31.8" fill="#6f6f68"/><polygon points="1494.6,593.8 1497.3,593.8 1495.9,596.0" fill="#bcbcb6"/><rect x="1501.5" y="557.2" width="2.7" height="31.2" fill="#bcbcb6"/><rect x="1503.3" y="557.2" width="0.9" height="31.2" fill="#6f6f68"/><polygon points="1501.5,588.4 1504.2,588.4 1502.8,590.6" fill="#bcbcb6"/><rect x="1508.2" y="552.5" width="2.6" height="30.6" fill="#bcbcb6"/><rect x="1509.9" y="552.5" width="0.9" height="30.6" fill="#6f6f68"/><polygon points="1508.2,583.1 1510.8,583.1 1509.5,585.3" fill="#bcbcb6"/><rect x="1514.7" y="548.0" width="2.6" height="30.0" fill="#bcbcb6"/><rect x="1516.4" y="548.0" width="0.9" height="30.0" fill="#6f6f68"/><polygon points="1514.7,578.0 1517.3,578.0 1516.0,580.2" fill="#bcbcb6"/>
<rect x="1526.7" y="540.0" width="2.6" height="34.0" fill="#bcbcb6"/><rect x="1528.4" y="540.0" width="0.9" height="34.0" fill="#6f6f68"/><polygon points="1526.7,574.0 1529.3,574.0 1528.0,576.2" fill="#bcbcb6"/><rect x="1535.8" y="534.0" width="2.5" height="32.0" fill="#bcbcb6"/><rect x="1537.3" y="534.0" width="0.9" height="32.0" fill="#6f6f68"/><polygon points="1535.8,566.0 1538.2,566.0 1537.0,568.2" fill="#bcbcb6"/><rect x="1544.8" y="528.0" width="2.4" height="30.0" fill="#bcbcb6"/><rect x="1546.3" y="528.0" width="0.9" height="30.0" fill="#6f6f68"/><polygon points="1544.8,558.0 1547.2,558.0 1546.0,560.2" fill="#bcbcb6"/>
<g opacity=".55"><rect x="1557.0" y="482.0" width="2.0" height="24.0" fill="#bcbcb6"/><rect x="1558.1" y="482.0" width="0.9" height="24.0" fill="#6f6f68"/><polygon points="1557.0,506.0 1559.0,506.0 1558.0,508.2" fill="#bcbcb6"/><rect x="1566.5" y="476.1" width="1.9" height="23.0" fill="#bcbcb6"/><rect x="1567.6" y="476.1" width="0.9" height="23.0" fill="#6f6f68"/><polygon points="1566.5,499.1 1568.5,499.1 1567.5,501.3" fill="#bcbcb6"/><rect x="1575.7" y="470.4" width="1.9" height="22.0" fill="#bcbcb6"/><rect x="1576.7" y="470.4" width="0.9" height="22.0" fill="#6f6f68"/><polygon points="1575.7,492.4 1577.6,492.4 1576.6,494.6" fill="#bcbcb6"/><rect x="1584.5" y="465.0" width="1.9" height="21.0" fill="#bcbcb6"/><rect x="1585.4" y="465.0" width="0.9" height="21.0" fill="#6f6f68"/><polygon points="1584.5,486.0 1586.3,486.0 1585.4,488.2" fill="#bcbcb6"/><rect x="1593.0" y="459.7" width="1.8" height="20.1" fill="#bcbcb6"/><rect x="1593.9" y="459.7" width="0.9" height="20.1" fill="#6f6f68"/><polygon points="1593.0,479.8 1594.8,479.8 1593.9,482.0" fill="#bcbcb6"/><rect x="1601.2" y="454.6" width="1.8" height="19.2" fill="#bcbcb6"/><rect x="1602.0" y="454.6" width="0.9" height="19.2" fill="#6f6f68"/><polygon points="1601.2,473.9 1602.9,473.9 1602.0,476.1" fill="#bcbcb6"/><rect x="1609.1" y="449.7" width="1.7" height="18.4" fill="#bcbcb6"/><rect x="1609.9" y="449.7" width="0.9" height="18.4" fill="#6f6f68"/><polygon points="1609.1,468.1 1610.8,468.1 1609.9,470.3" fill="#bcbcb6"/><rect x="1616.7" y="445.0" width="1.7" height="17.6" fill="#bcbcb6"/><rect x="1617.5" y="445.0" width="0.9" height="17.6" fill="#6f6f68"/><polygon points="1616.7,462.6 1618.4,462.6 1617.5,464.8" fill="#bcbcb6"/><rect x="1624.1" y="440.4" width="1.6" height="16.8" fill="#bcbcb6"/><rect x="1624.8" y="440.4" width="0.9" height="16.8" fill="#6f6f68"/><polygon points="1624.1,457.2 1625.7,457.2 1624.9,459.4" fill="#bcbcb6"/><rect x="1631.2" y="436.0" width="1.6" height="16.0" fill="#bcbcb6"/><rect x="1631.9" y="436.0" width="0.9" height="16.0" fill="#6f6f68"/><polygon points="1631.2,452.0 1632.8,452.0 1632.0,454.2" fill="#bcbcb6"/></g>
<g opacity=".45"><rect x="1561.1" y="474.0" width="1.8" height="20.0" fill="#bcbcb6"/><rect x="1562.0" y="474.0" width="0.9" height="20.0" fill="#6f6f68"/><polygon points="1561.1,494.0 1562.9,494.0 1562.0,496.2" fill="#bcbcb6"/><rect x="1569.0" y="469.1" width="1.8" height="19.3" fill="#bcbcb6"/><rect x="1569.8" y="469.1" width="0.9" height="19.3" fill="#6f6f68"/><polygon points="1569.0,488.5 1570.7,488.5 1569.9,490.7" fill="#bcbcb6"/><rect x="1576.6" y="464.5" width="1.7" height="18.6" fill="#bcbcb6"/><rect x="1577.4" y="464.5" width="0.9" height="18.6" fill="#6f6f68"/><polygon points="1576.6,483.1 1578.3,483.1 1577.5,485.3" fill="#bcbcb6"/><rect x="1583.9" y="459.9" width="1.7" height="18.0" fill="#bcbcb6"/><rect x="1584.7" y="459.9" width="0.9" height="18.0" fill="#6f6f68"/><polygon points="1583.9,477.9 1585.6,477.9 1584.8,480.1" fill="#bcbcb6"/><rect x="1591.1" y="455.5" width="1.7" height="17.4" fill="#bcbcb6"/><rect x="1591.8" y="455.5" width="0.9" height="17.4" fill="#6f6f68"/><polygon points="1591.1,472.9 1592.7,472.9 1591.9,475.1" fill="#bcbcb6"/><rect x="1597.9" y="451.3" width="1.6" height="16.8" fill="#bcbcb6"/><rect x="1598.7" y="451.3" width="0.9" height="16.8" fill="#6f6f68"/><polygon points="1597.9,468.1 1599.6,468.1 1598.8,470.3" fill="#bcbcb6"/><rect x="1604.6" y="447.2" width="1.6" height="16.2" fill="#bcbcb6"/><rect x="1605.3" y="447.2" width="0.9" height="16.2" fill="#6f6f68"/><polygon points="1604.6,463.4 1606.2,463.4 1605.4,465.6" fill="#bcbcb6"/><rect x="1611.1" y="443.2" width="1.6" height="15.6" fill="#bcbcb6"/><rect x="1611.7" y="443.2" width="0.9" height="15.6" fill="#6f6f68"/><polygon points="1611.1,458.8 1612.6,458.8 1611.8,461.0" fill="#bcbcb6"/><rect x="1617.3" y="439.4" width="1.6" height="15.1" fill="#bcbcb6"/><rect x="1618.0" y="439.4" width="0.9" height="15.1" fill="#6f6f68"/><polygon points="1617.3,454.4 1618.9,454.4 1618.1,456.6" fill="#bcbcb6"/><rect x="1623.4" y="435.6" width="1.5" height="14.5" fill="#bcbcb6"/><rect x="1624.0" y="435.6" width="0.9" height="14.5" fill="#6f6f68"/><polygon points="1623.4,450.1 1624.9,450.1 1624.1,452.3" fill="#bcbcb6"/><rect x="1629.2" y="432.0" width="1.5" height="14.0" fill="#bcbcb6"/><rect x="1629.8" y="432.0" width="0.9" height="14.0" fill="#6f6f68"/><polygon points="1629.2,446.0 1630.8,446.0 1630.0,448.2" fill="#bcbcb6"/></g>
<rect x="1550.7" y="492.0" width="2.6" height="30.0" fill="#bcbcb6"/><rect x="1552.4" y="492.0" width="0.9" height="30.0" fill="#6f6f68"/><polygon points="1550.7,522.0 1553.3,522.0 1552.0,524.2" fill="#bcbcb6"/><rect x="1557.2" y="488.0" width="2.6" height="29.2" fill="#bcbcb6"/><rect x="1558.9" y="488.0" width="0.9" height="29.2" fill="#6f6f68"/><polygon points="1557.2,517.2 1559.8,517.2 1558.5,519.4" fill="#bcbcb6"/><rect x="1563.6" y="484.0" width="2.5" height="28.5" fill="#bcbcb6"/><rect x="1565.2" y="484.0" width="0.9" height="28.5" fill="#6f6f68"/><polygon points="1563.6,512.5 1566.1,512.5 1564.9,514.7" fill="#bcbcb6"/><rect x="1569.9" y="480.2" width="2.5" height="27.7" fill="#bcbcb6"/><rect x="1571.4" y="480.2" width="0.9" height="27.7" fill="#6f6f68"/><polygon points="1569.9,507.9 1572.3,507.9 1571.1,510.1" fill="#bcbcb6"/><rect x="1576.0" y="476.4" width="2.4" height="27.0" fill="#bcbcb6"/><rect x="1577.5" y="476.4" width="0.9" height="27.0" fill="#6f6f68"/><polygon points="1576.0,503.4 1578.4,503.4 1577.2,505.6" fill="#bcbcb6"/><rect x="1581.9" y="472.7" width="2.4" height="26.3" fill="#bcbcb6"/><rect x="1583.4" y="472.7" width="0.9" height="26.3" fill="#6f6f68"/><polygon points="1581.9,499.0 1584.3,499.0 1583.1,501.2" fill="#bcbcb6"/><rect x="1587.8" y="469.1" width="2.3" height="25.6" fill="#bcbcb6"/><rect x="1589.2" y="469.1" width="0.9" height="25.6" fill="#6f6f68"/><polygon points="1587.8,494.7 1590.1,494.7 1588.9,496.9" fill="#bcbcb6"/><rect x="1593.5" y="465.6" width="2.3" height="24.9" fill="#bcbcb6"/><rect x="1594.9" y="465.6" width="0.9" height="24.9" fill="#6f6f68"/><polygon points="1593.5,490.6 1595.8,490.6 1594.6,492.8" fill="#bcbcb6"/><rect x="1599.0" y="462.2" width="2.3" height="24.3" fill="#bcbcb6"/><rect x="1600.4" y="462.2" width="0.9" height="24.3" fill="#6f6f68"/><polygon points="1599.0,486.4 1601.3,486.4 1600.2,488.6" fill="#bcbcb6"/><rect x="1604.5" y="458.8" width="2.2" height="23.6" fill="#bcbcb6"/><rect x="1605.8" y="458.8" width="0.9" height="23.6" fill="#6f6f68"/><polygon points="1604.5,482.4 1606.7,482.4 1605.6,484.6" fill="#bcbcb6"/><rect x="1609.9" y="455.5" width="2.2" height="23.0" fill="#bcbcb6"/><rect x="1611.1" y="455.5" width="0.9" height="23.0" fill="#6f6f68"/><polygon points="1609.9,478.5 1612.0,478.5 1610.9,480.7" fill="#bcbcb6"/><rect x="1615.1" y="452.3" width="2.1" height="22.4" fill="#bcbcb6"/><rect x="1616.3" y="452.3" width="0.9" height="22.4" fill="#6f6f68"/><polygon points="1615.1,474.6 1617.2,474.6 1616.2,476.8" fill="#bcbcb6"/><rect x="1620.2" y="449.1" width="2.1" height="21.8" fill="#bcbcb6"/><rect x="1621.4" y="449.1" width="0.9" height="21.8" fill="#6f6f68"/><polygon points="1620.2,470.9 1622.3,470.9 1621.3,473.1" fill="#bcbcb6"/><rect x="1625.3" y="446.0" width="2.1" height="21.2" fill="#bcbcb6"/><rect x="1626.4" y="446.0" width="0.9" height="21.2" fill="#6f6f68"/><polygon points="1625.3,467.2 1627.3,467.2 1626.3,469.4" fill="#bcbcb6"/><rect x="1630.2" y="443.0" width="2.0" height="20.6" fill="#bcbcb6"/><rect x="1631.3" y="443.0" width="0.9" height="20.6" fill="#6f6f68"/><polygon points="1630.2,463.5 1632.2,463.5 1631.2,465.7" fill="#bcbcb6"/><rect x="1635.0" y="440.0" width="2.0" height="20.0" fill="#bcbcb6"/><rect x="1636.1" y="440.0" width="0.9" height="20.0" fill="#6f6f68"/><polygon points="1635.0,460.0 1637.0,460.0 1636.0,462.2" fill="#bcbcb6"/>
<polygon points="1070.7,348.3 1352.9,286.9 1354.3,294.5 1096.0,357.2" fill="#cf643f" />
<polygon points="1352.9,286.9 1476.0,306.8 1476.0,314.8 1354.3,294.5" fill="#c45a36" />
<polygon points="1096.0,357.2 1354.3,294.5 1476.0,314.5 1480.0,330.0 1445.0,395.0 1443.6,443.0 1399.0,463.0" fill="#9294af" />
<path d="M1070.7 348.3 L1352.9 286.9" stroke="#8c8e98" stroke-width="1.2" />
<path d="M1352.9 286.9 L1476.0 306.8" stroke="#8c8e98" stroke-width="1.2" />
<polygon points="1300.0,304.3 1340.0,312.9 1340.0,354.3 1300.0,331.4" fill="#b3522f" />
<polygon points="1340.0,312.9 1360.0,307.9 1360.0,341.4 1340.0,350.0" fill="#c75f3b" />
<polygon points="1300.0,304.3 1318.6,299.7 1360.0,307.9 1340.0,312.9" fill="#c75f3b" />
<polygon points="1310.0,304.7 1321.4,302.0 1351.4,308.0 1340.0,311.0" fill="#9294af" />
<polygon points="1344.3,316.4 1355.0,314.0 1355.0,342.1 1344.3,345.7" fill="#2a2f36" />
<polygon points="1345.1,317.9 1354.1,315.7 1354.1,326.4 1345.1,328.9" fill="#a58383" />
<polygon points="1345.1,330.7 1354.1,328.3 1354.1,340.7 1345.1,343.7" fill="#5d6672" />
<path d="M1300.0 304.3 L1340.0 312.9" stroke="#8c8e98" stroke-width="1" />
<path d="M1340.0 312.9 L1360.0 307.9" stroke="#8c8e98" stroke-width="1" />
<path d="M1340.0 312.9 L1340.0 353.6" stroke="#8a4025" stroke-width="0.8" />
<polygon points="1254.3,347.9 1255.7,344.0 1325.7,325.7 1325.7,353.6 1307.9,362.1" fill="#20262b" />
<polygon points="1268.6,340.6 1272.9,339.5 1272.9,348.7 1268.6,348.1" fill="#e9e5d9" />
<polygon points="1279.3,337.8 1285.0,336.3 1285.0,350.3 1279.3,349.6" fill="#e9e5d9" />
<polygon points="1296.0,333.5 1300.3,332.4 1300.3,352.3 1296.0,351.8" fill="#e9e5d9" />
<polygon points="1310.0,329.8 1314.3,328.7 1314.3,354.2 1310.0,353.6" fill="#e9e5d9" />
<polygon points="1322.6,326.5 1327.1,325.3 1327.1,355.9 1322.6,355.3" fill="#e9e5d9" />
<polygon points="1244.3,346.4 1254.3,347.9 1307.9,362.1 1307.9,370.7 1244.3,353.6" fill="#cdc7ab" />
<path d="M1255.7 344.0 L1325.7 325.7" stroke="#8c8e98" stroke-width="1.2" />
<polygon points="1360.7,312.9 1441.4,328.9 1407.1,343.1 1381.4,338.9 1360.7,341.7" fill="#21272c" />
<clipPath id="crc"><polygon points="1360.7,312.9 1441.4,328.9 1407.1,343.1 1381.4,338.9 1360.7,341.7"/></clipPath><g clip-path="url(#crc)">
<polygon points="1360.7,312.9 1367.4,314.0 1367.4,341.4 1360.7,342.1" fill="#ece8dc" />
<polygon points="1377.1,316.1 1380.9,317.0 1380.9,349.0 1377.1,349.0" fill="#d9d3bd" />
<polygon points="1386.0,317.9 1390.3,318.7 1390.3,350.7 1386.0,350.7" fill="#d9d3bd" />
<polygon points="1395.7,319.8 1400.3,320.6 1400.3,352.6 1395.7,352.6" fill="#d9d3bd" />
<polygon points="1410.7,322.8 1415.3,323.6 1415.3,355.6 1410.7,355.6" fill="#d3cdb7" />
<polygon points="1420.7,324.7 1425.0,325.6 1425.0,357.6 1420.7,357.6" fill="#d3cdb7" />
<polygon points="1360.7,335.0 1441.4,337.1 1441.4,344.3 1360.7,344.3" fill="#21272c" opacity=".35"/>
</g>
<path d="M1360.7 312.9 L1441.4 328.9" stroke="#8c8e98" stroke-width="1" />
<polygon points="1518.6,295.4 1632.1,311.4 1623.0,316.6 1521.4,304.3" fill="#c9603c" />
<polygon points="1518.6,295.4 1480.0,306.4 1480.0,315.0 1521.4,304.3" fill="#b3522f" />
<polygon points="1475.7,306.9 1506.4,311.4 1506.4,320.7 1475.7,316.9" fill="#c9603c" />
<polygon points="1338.0,365.5 1381.4,350.7 1407.1,354.3 1478.6,326.4 1475.7,316.9 1506.4,320.7 1506.4,308.2 1521.4,304.3 1623.0,316.6 1631.0,312.6 1443.6,393.6" fill="#989ab5" />
<polygon points="1310.0,358.6 1381.4,338.6 1381.4,350.7 1340.7,364.0" fill="#c45b37" />
<polygon points="1381.4,338.6 1407.1,342.9 1407.1,354.3 1381.4,350.7" fill="#b3522f" />
<polygon points="1407.1,342.9 1478.6,317.1 1478.6,326.4 1407.1,354.3" fill="#c45b37" />
<path d="M1310.0 358.6 L1381.4 338.6" stroke="#8c8e98" stroke-width="1.1" />
<path d="M1381.4 338.6 L1407.1 342.9" stroke="#8c8e98" stroke-width="1.1" />
<path d="M1407.1 342.9 L1478.6 317.1" stroke="#8c8e98" stroke-width="1.1" />
<path d="M1518.6 295.4 L1632.1 311.4" stroke="#8c8e98" stroke-width="1.1" />
<path d="M1518.6 295.4 L1480.0 306.4" stroke="#8c8e98" stroke-width="1.1" />
<path d="M1475.7 306.9 L1506.4 311.4" stroke="#8c8e98" stroke-width="1.1" />
<path d="M1506.4 311.4 L1506.4 320.7" stroke="#8c8e98" stroke-width="1.1" />
<polygon points="1308.6,358.6 1443.6,393.6 1443.6,443.0 1418.6,453.6 1308.6,414.3" fill="#a84e2e" />
<linearGradient id="wg" x1="0" y1="0" x2="0.3" y2="1"><stop offset="0" stop-color="#9c4829"/><stop offset="1" stop-color="#b85732"/></linearGradient>
<polygon points="1308.6,358.6 1443.6,393.6 1443.6,443.0 1418.6,453.6 1308.6,414.3" fill="url(#wg)" />
<path d="M1308.6 358.6 L1443.6 393.6" stroke="#8c8e98" stroke-width="1.3" />
<path d="M1308.6 375.0 L1443.6 412.9" stroke="#6e3019" stroke-width="0.7" />
<path d="M1308.6 360.7 L1443.6 396.0" stroke="#7a3a20" stroke-width="0.6" />
<polygon points="1317.1,402.1 1330.7,400.7 1330.7,422.1 1317.1,424.3" fill="#c98a7a" stroke="#9a8f8c" stroke-width="0.7" opacity=".85"/>
<path d="M1323.6 401.4 L1323.6 423.1" stroke="#d9a89b" stroke-width="0.8" />
<path d="M1345.4 391.4 L1345.4 378.6" stroke="#1212ee" stroke-width="1.5" />
<path d="M1345.4 391.4 L1336.4 395.1" stroke="#ee1111" stroke-width="1.5" />
<path d="M1345.4 391.4 L1356.0 394.6" stroke="#11dd22" stroke-width="1.5" />
<polygon points="1070.7,348.3 1399.0,463.0 1398.0,597.0 1081.7,443.3" fill="#c45633" />
<polygon points="1079.1,355.3 1081.9,356.3 1085.3,387.0 1082.5,385.9" fill="#22272a" />
<polygon points="1081.3,369.7 1082.9,370.2 1084.3,383.1 1082.8,382.5" fill="#545d66" />
<polygon points="1083.2,392.7 1086.0,393.8 1088.4,415.9 1085.7,414.7" fill="#22272a" />
<polygon points="1084.7,399.6 1086.2,400.2 1087.6,413.0 1086.1,412.3" fill="#545d66" />
<polygon points="1086.4,420.6 1089.1,421.9 1091.8,446.5 1089.1,445.2" fill="#22272a" />
<polygon points="1087.9,428.3 1089.4,429.0 1090.9,443.3 1089.5,442.5" fill="#545d66" />
<polygon points="1085.5,357.6 1093.3,360.3 1096.6,391.7 1088.8,388.5" fill="#22272a" />
<polygon points="1088.3,372.3 1090.5,373.1 1091.9,386.2 1089.7,385.3" fill="#545d66" />
<polygon points="1091.3,373.4 1093.6,374.3 1095.0,387.5 1092.7,386.5" fill="#545d66" />
<polygon points="1088.3,372.3 1090.5,373.1 1091.3,380.3 1089.0,379.4" fill="#87706f" opacity=".6"/>
<polygon points="1089.6,395.3 1097.3,398.5 1099.7,421.0 1092.0,417.5" fill="#22272a" />
<polygon points="1091.5,402.5 1093.8,403.5 1095.1,416.4 1092.9,415.4" fill="#545d66" />
<polygon points="1094.5,403.8 1096.8,404.7 1098.2,417.7 1095.9,416.7" fill="#545d66" />
<polygon points="1091.5,402.5 1093.8,403.5 1094.5,410.6 1092.3,409.6" fill="#87706f" opacity=".6"/>
<polygon points="1092.6,423.5 1100.3,427.1 1102.9,451.8 1095.3,448.1" fill="#22272a" />
<polygon points="1094.6,431.5 1096.9,432.5 1098.4,446.8 1096.2,445.8" fill="#545d66" />
<polygon points="1097.6,432.9 1099.9,433.9 1101.4,448.3 1099.2,447.2" fill="#545d66" />
<polygon points="1094.6,431.5 1096.9,432.5 1097.7,440.4 1095.5,439.3" fill="#87706f" opacity=".6"/>
<polygon points="1096.8,361.6 1099.7,362.6 1102.9,394.3 1100.1,393.1" fill="#22272a" />
<polygon points="1099.1,376.4 1100.6,377.0 1102.0,390.3 1100.4,389.6" fill="#545d66" />
<polygon points="1100.8,400.0 1103.6,401.2 1105.9,423.8 1103.1,422.5" fill="#22272a" />
<polygon points="1102.2,407.0 1103.8,407.7 1105.1,420.8 1103.5,420.1" fill="#545d66" />
<polygon points="1103.7,428.6 1106.5,429.9 1109.1,454.8 1106.3,453.5" fill="#22272a" />
<polygon points="1105.2,436.4 1106.7,437.1 1108.2,451.6 1106.7,450.8" fill="#545d66" />
<polygon points="1103.3,363.8 1111.8,366.8 1114.9,399.2 1106.5,395.8" fill="#22272a" />
<polygon points="1106.1,379.0 1108.6,380.0 1109.9,393.5 1107.5,392.5" fill="#545d66" />
<polygon points="1109.4,380.3 1111.9,381.2 1113.2,394.8 1110.7,393.8" fill="#545d66" />
<polygon points="1106.1,379.0 1108.6,380.0 1109.3,387.4 1106.9,386.4" fill="#87706f" opacity=".6"/>
<polygon points="1107.2,402.6 1115.6,406.1 1117.7,429.1 1109.4,425.4" fill="#22272a" />
<polygon points="1109.2,410.0 1111.6,411.1 1112.9,424.3 1110.5,423.3" fill="#545d66" />
<polygon points="1112.5,411.4 1114.9,412.5 1116.2,425.8 1113.7,424.7" fill="#545d66" />
<polygon points="1109.2,410.0 1111.6,411.1 1112.3,418.4 1109.9,417.3" fill="#87706f" opacity=".6"/>
<polygon points="1110.1,431.6 1118.3,435.4 1120.7,460.5 1112.5,456.5" fill="#22272a" />
<polygon points="1112.1,439.7 1114.5,440.8 1115.9,455.3 1113.6,454.1" fill="#545d66" />
<polygon points="1115.3,441.2 1117.7,442.3 1119.1,456.8 1116.8,455.7" fill="#545d66" />
<polygon points="1112.1,439.7 1114.5,440.8 1115.3,448.8 1112.9,447.6" fill="#87706f" opacity=".6"/>
<polygon points="1119.0,369.3 1122.5,370.5 1125.5,403.6 1122.0,402.2" fill="#22272a" />
<polygon points="1121.3,384.8 1123.2,385.5 1124.4,399.4 1122.5,398.6" fill="#545d66" />
<polygon points="1122.6,409.1 1126.1,410.5 1128.2,433.8 1124.8,432.3" fill="#22272a" />
<polygon points="1124.1,416.4 1126.0,417.2 1127.3,430.7 1125.4,429.9" fill="#545d66" />
<polygon points="1125.4,438.6 1128.8,440.2 1131.0,465.5 1127.7,463.8" fill="#22272a" />
<polygon points="1126.9,446.6 1128.8,447.4 1130.1,462.1 1128.2,461.2" fill="#545d66" />
<polygon points="1126.8,372.1 1130.4,373.3 1133.3,406.8 1129.7,405.4" fill="#22272a" />
<polygon points="1129.0,387.7 1131.0,388.4 1132.2,402.5 1130.3,401.7" fill="#545d66" />
<polygon points="1130.3,412.3 1133.9,413.8 1135.9,437.3 1132.4,435.7" fill="#22272a" />
<polygon points="1131.8,419.7 1133.8,420.5 1135.0,434.2 1133.0,433.3" fill="#545d66" />
<polygon points="1133.0,442.1 1136.5,443.7 1138.7,469.1 1135.2,467.5" fill="#22272a" />
<polygon points="1134.5,450.1 1136.4,451.0 1137.7,465.8 1135.8,464.8" fill="#545d66" />
<polygon points="1136.1,375.3 1144.6,378.3 1147.4,412.6 1138.9,409.1" fill="#22272a" />
<polygon points="1138.7,391.4 1141.2,392.3 1142.4,406.6 1139.9,405.6" fill="#545d66" />
<polygon points="1142.1,392.6 1144.5,393.6 1145.7,408.0 1143.2,407.0" fill="#545d66" />
<polygon points="1138.7,391.4 1141.2,392.3 1141.9,400.2 1139.4,399.2" fill="#87706f" opacity=".6"/>
<polygon points="1139.5,416.1 1148.0,419.6 1149.9,443.6 1141.5,439.8" fill="#22272a" />
<polygon points="1141.4,423.8 1143.9,424.8 1145.0,438.7 1142.6,437.6" fill="#545d66" />
<polygon points="1144.7,425.2 1147.2,426.2 1148.3,440.1 1145.9,439.1" fill="#545d66" />
<polygon points="1141.4,423.8 1143.9,424.8 1144.5,432.5 1142.1,431.4" fill="#87706f" opacity=".6"/>
<polygon points="1142.0,446.3 1150.4,450.2 1152.5,475.8 1144.2,471.8" fill="#22272a" />
<polygon points="1144.0,454.6 1146.4,455.7 1147.6,470.5 1145.2,469.4" fill="#545d66" />
<polygon points="1147.3,456.1 1149.7,457.2 1150.9,472.1 1148.5,470.9" fill="#545d66" />
<polygon points="1144.0,454.6 1146.4,455.7 1147.1,463.9 1144.7,462.7" fill="#87706f" opacity=".6"/>
<polygon points="1154.6,381.8 1163.9,385.1 1166.4,420.5 1157.3,416.7" fill="#22272a" />
<polygon points="1157.3,398.4 1160.0,399.4 1161.1,414.2 1158.4,413.1" fill="#545d66" />
<polygon points="1160.9,399.8 1163.6,400.8 1164.7,415.6 1162.0,414.6" fill="#545d66" />
<polygon points="1157.3,398.4 1160.0,399.4 1160.6,407.5 1157.9,406.5" fill="#87706f" opacity=".6"/>
<polygon points="1157.8,423.7 1167.0,427.5 1168.7,452.1 1159.6,448.0" fill="#22272a" />
<polygon points="1159.8,431.6 1162.5,432.8 1163.5,446.9 1160.9,445.8" fill="#545d66" />
<polygon points="1163.4,433.2 1166.0,434.3 1167.1,448.5 1164.4,447.4" fill="#545d66" />
<polygon points="1159.8,431.6 1162.5,432.8 1163.0,440.6 1160.4,439.4" fill="#87706f" opacity=".6"/>
<polygon points="1160.1,454.6 1169.2,458.8 1171.1,484.8 1162.1,480.5" fill="#22272a" />
<polygon points="1162.2,463.1 1164.8,464.3 1165.9,479.3 1163.3,478.1" fill="#545d66" />
<polygon points="1165.7,464.7 1168.3,466.0 1169.4,481.0 1166.8,479.8" fill="#545d66" />
<polygon points="1162.2,463.1 1164.8,464.3 1165.4,472.6 1162.8,471.3" fill="#87706f" opacity=".6"/>
<polygon points="1169.6,387.1 1179.6,390.6 1181.9,426.9 1172.1,422.8" fill="#22272a" />
<polygon points="1172.3,404.1 1175.2,405.2 1176.2,420.3 1173.4,419.1" fill="#545d66" />
<polygon points="1176.2,405.6 1179.1,406.6 1180.1,421.9 1177.2,420.7" fill="#545d66" />
<polygon points="1172.3,404.1 1175.2,405.2 1175.8,413.5 1172.9,412.4" fill="#87706f" opacity=".6"/>
<polygon points="1172.6,429.9 1182.4,434.0 1184.0,459.0 1174.3,454.6" fill="#22272a" />
<polygon points="1174.7,438.0 1177.5,439.2 1178.5,453.6 1175.6,452.4" fill="#545d66" />
<polygon points="1178.5,439.6 1181.3,440.8 1182.3,455.3 1179.5,454.1" fill="#545d66" />
<polygon points="1174.7,438.0 1177.5,439.2 1178.0,447.1 1175.2,445.9" fill="#87706f" opacity=".6"/>
<polygon points="1174.8,461.4 1184.5,465.9 1186.2,492.2 1176.6,487.5" fill="#22272a" />
<polygon points="1176.8,469.9 1179.7,471.3 1180.7,486.5 1177.9,485.1" fill="#545d66" />
<polygon points="1180.6,471.7 1183.4,473.0 1184.5,488.3 1181.7,486.9" fill="#545d66" />
<polygon points="1176.8,469.9 1179.7,471.3 1180.2,479.6 1177.4,478.3" fill="#87706f" opacity=".6"/>
<polygon points="1185.3,392.5 1195.3,396.0 1197.4,433.2 1187.6,429.2" fill="#22272a" />
<polygon points="1187.9,410.0 1190.8,411.1 1191.7,426.6 1188.9,425.4" fill="#545d66" />
<polygon points="1191.8,411.5 1194.7,412.5 1195.6,428.1 1192.7,427.0" fill="#545d66" />
<polygon points="1187.9,410.0 1190.8,411.1 1191.3,419.6 1188.4,418.5" fill="#87706f" opacity=".6"/>
<polygon points="1188.0,436.3 1197.9,440.4 1199.4,466.0 1189.6,461.6" fill="#22272a" />
<polygon points="1190.1,444.6 1192.9,445.8 1193.8,460.5 1191.0,459.2" fill="#545d66" />
<polygon points="1193.9,446.2 1196.7,447.4 1197.6,462.2 1194.8,460.9" fill="#545d66" />
<polygon points="1190.1,444.6 1192.9,445.8 1193.4,453.9 1190.6,452.6" fill="#87706f" opacity=".6"/>
<polygon points="1190.0,468.4 1199.8,472.9 1201.3,499.5 1191.7,494.8" fill="#22272a" />
<polygon points="1192.1,477.1 1194.9,478.4 1195.8,493.8 1193.0,492.4" fill="#545d66" />
<polygon points="1195.9,478.9 1198.7,480.2 1199.6,495.6 1196.8,494.2" fill="#545d66" />
<polygon points="1192.1,477.1 1194.9,478.4 1195.4,486.8 1192.6,485.5" fill="#87706f" opacity=".6"/>
<polygon points="1200.9,398.0 1212.3,402.0 1214.3,440.2 1203.1,435.6" fill="#22272a" />
<polygon points="1203.7,416.0 1207.0,417.2 1207.9,433.1 1204.6,431.8" fill="#545d66" />
<polygon points="1208.1,417.6 1211.4,418.9 1212.3,434.9 1209.0,433.6" fill="#545d66" />
<polygon points="1203.7,416.0 1207.0,417.2 1207.5,426.0 1204.2,424.7" fill="#87706f" opacity=".6"/>
<polygon points="1203.5,442.7 1214.7,447.4 1216.1,473.5 1204.9,468.5" fill="#22272a" />
<polygon points="1205.7,451.2 1208.9,452.6 1209.8,467.6 1206.5,466.2" fill="#545d66" />
<polygon points="1210.1,453.1 1213.3,454.5 1214.1,469.6 1210.9,468.1" fill="#545d66" />
<polygon points="1205.7,451.2 1208.9,452.6 1209.4,460.9 1206.2,459.4" fill="#87706f" opacity=".6"/>
<polygon points="1205.3,475.5 1216.4,480.6 1217.8,507.5 1206.8,502.2" fill="#22272a" />
<polygon points="1207.5,484.3 1210.8,485.8 1211.6,501.3 1208.4,499.8" fill="#545d66" />
<polygon points="1211.9,486.3 1215.1,487.8 1215.9,503.4 1212.7,501.9" fill="#545d66" />
<polygon points="1207.5,484.3 1210.8,485.8 1211.2,494.4 1208.0,492.8" fill="#87706f" opacity=".6"/>
<polygon points="1218.1,404.1 1223.8,406.0 1225.7,444.9 1220.0,442.5" fill="#22272a" />
<polygon points="1220.4,422.3 1223.5,423.5 1224.3,439.7 1221.2,438.5" fill="#545d66" />
<polygon points="1220.4,449.8 1226.0,452.1 1227.3,478.6 1221.7,476.0" fill="#22272a" />
<polygon points="1222.2,458.3 1225.3,459.6 1226.0,474.9 1222.9,473.5" fill="#545d66" />
<polygon points="1222.1,483.2 1227.6,485.8 1228.9,512.8 1223.4,510.2" fill="#22272a" />
<polygon points="1223.9,491.9 1226.9,493.4 1227.7,509.1 1224.6,507.6" fill="#545d66" />
<polygon points="1233.1,409.3 1248.1,414.5 1249.6,454.7 1234.8,448.6" fill="#22272a" />
<polygon points="1236.3,428.3 1240.6,429.9 1241.3,446.6 1237.0,444.9" fill="#545d66" />
<polygon points="1242.1,430.5 1246.4,432.1 1247.1,448.9 1242.8,447.2" fill="#545d66" />
<polygon points="1236.3,428.3 1240.6,429.9 1241.0,439.1 1236.7,437.4" fill="#87706f" opacity=".6"/>
<polygon points="1235.2,455.9 1249.9,462.1 1251.0,489.3 1236.3,482.6" fill="#22272a" />
<polygon points="1237.9,465.0 1242.1,466.8 1242.8,482.4 1238.5,480.5" fill="#545d66" />
<polygon points="1243.6,467.4 1247.9,469.2 1248.5,484.9 1244.3,483.0" fill="#545d66" />
<polygon points="1237.9,465.0 1242.1,466.8 1242.5,475.4 1238.2,473.5" fill="#87706f" opacity=".6"/>
<polygon points="1236.7,489.9 1251.3,496.7 1252.3,524.2 1237.9,517.2" fill="#22272a" />
<polygon points="1239.4,499.2 1243.6,501.2 1244.3,517.1 1240.1,515.0" fill="#545d66" />
<polygon points="1245.0,501.9 1249.3,503.8 1249.9,519.8 1245.7,517.7" fill="#545d66" />
<polygon points="1239.4,499.2 1243.6,501.2 1244.0,509.9 1239.7,507.9" fill="#87706f" opacity=".6"/>
<polygon points="1255.2,417.0 1268.0,421.5 1269.4,462.8 1256.6,457.6" fill="#22272a" />
<polygon points="1257.9,436.5 1261.6,437.9 1262.2,455.1 1258.5,453.6" fill="#545d66" />
<polygon points="1262.9,438.4 1266.6,439.8 1267.2,457.1 1263.5,455.6" fill="#545d66" />
<polygon points="1257.9,436.5 1261.6,437.9 1261.9,447.3 1258.2,445.9" fill="#87706f" opacity=".6"/>
<polygon points="1256.9,465.0 1269.6,470.3 1270.5,498.1 1257.9,492.4" fill="#22272a" />
<polygon points="1259.2,474.1 1262.9,475.6 1263.5,491.6 1259.8,490.0" fill="#545d66" />
<polygon points="1264.2,476.2 1267.8,477.7 1268.4,493.8 1264.7,492.2" fill="#545d66" />
<polygon points="1259.2,474.1 1262.9,475.6 1263.2,484.4 1259.5,482.8" fill="#87706f" opacity=".6"/>
<polygon points="1258.2,499.9 1270.7,505.6 1271.6,533.5 1259.2,527.5" fill="#22272a" />
<polygon points="1260.5,509.1 1264.1,510.8 1264.7,526.9 1261.1,525.1" fill="#545d66" />
<polygon points="1265.4,511.4 1269.0,513.1 1269.5,529.2 1265.9,527.5" fill="#545d66" />
<polygon points="1260.5,509.1 1264.1,510.8 1264.4,519.6 1260.8,517.9" fill="#87706f" opacity=".6"/>
<polygon points="1274.7,423.9 1288.3,428.6 1289.4,471.1 1276.0,465.6" fill="#22272a" />
<polygon points="1277.5,443.9 1281.4,445.4 1281.9,463.0 1278.0,461.4" fill="#545d66" />
<polygon points="1282.7,445.9 1286.6,447.4 1287.1,465.1 1283.2,463.6" fill="#545d66" />
<polygon points="1277.5,443.9 1281.4,445.4 1281.6,455.1 1277.7,453.5" fill="#87706f" opacity=".6"/>
<polygon points="1276.2,473.0 1289.6,478.6 1290.3,507.0 1277.0,501.0" fill="#22272a" />
<polygon points="1278.6,482.3 1282.4,484.0 1282.9,500.3 1279.0,498.6" fill="#545d66" />
<polygon points="1283.8,484.5 1287.7,486.2 1288.1,502.6 1284.2,500.9" fill="#545d66" />
<polygon points="1278.6,482.3 1282.4,484.0 1282.7,493.0 1278.8,491.3" fill="#87706f" opacity=".6"/>
<polygon points="1277.3,508.6 1290.5,514.7 1291.2,543.0 1278.1,536.7" fill="#22272a" />
<polygon points="1279.6,518.0 1283.4,519.8 1283.9,536.1 1280.1,534.3" fill="#545d66" />
<polygon points="1284.8,520.4 1288.6,522.2 1289.0,538.6 1285.2,536.8" fill="#545d66" />
<polygon points="1279.6,518.0 1283.4,519.8 1283.7,528.8 1279.9,527.0" fill="#87706f" opacity=".6"/>
<polygon points="1295.4,431.1 1302.6,433.7 1303.5,476.9 1296.4,474.0" fill="#22272a" />
<polygon points="1297.6,451.5 1301.6,453.0 1302.0,471.1 1298.0,469.6" fill="#545d66" />
<polygon points="1296.6,481.5 1303.6,484.4 1304.2,513.3 1297.2,510.1" fill="#22272a" />
<polygon points="1298.5,490.8 1302.4,492.5 1302.8,509.2 1298.9,507.5" fill="#545d66" />
<polygon points="1297.4,517.9 1304.4,521.2 1305.0,549.7 1298.0,546.3" fill="#22272a" />
<polygon points="1299.3,527.3 1303.2,529.1 1303.5,545.6 1299.7,543.7" fill="#545d66" />
<polygon points="1309.7,436.1 1325.6,441.7 1326.2,486.2 1310.5,479.8" fill="#22272a" />
<polygon points="1312.6,457.2 1317.2,458.9 1317.5,477.4 1312.9,475.6" fill="#545d66" />
<polygon points="1318.7,459.5 1323.3,461.2 1323.6,479.9 1319.0,478.0" fill="#545d66" />
<polygon points="1312.6,457.2 1317.2,458.9 1317.3,469.1 1312.8,467.3" fill="#87706f" opacity=".6"/>
<polygon points="1310.6,487.4 1326.3,493.9 1326.7,523.4 1311.2,516.4" fill="#22272a" />
<polygon points="1313.3,497.1 1317.8,499.1 1318.1,516.0 1313.6,514.0" fill="#545d66" />
<polygon points="1319.4,499.7 1323.9,501.7 1324.1,518.7 1319.6,516.7" fill="#545d66" />
<polygon points="1313.3,497.1 1317.8,499.1 1318.0,508.4 1313.4,506.4" fill="#87706f" opacity=".6"/>
<polygon points="1311.3,524.3 1326.8,531.5 1327.2,560.4 1311.8,553.0" fill="#22272a" />
<polygon points="1313.9,534.1 1318.4,536.2 1318.7,552.9 1314.2,550.7" fill="#545d66" />
<polygon points="1319.9,536.9 1324.4,539.0 1324.7,555.8 1320.2,553.6" fill="#545d66" />
<polygon points="1313.9,534.1 1318.4,536.2 1318.5,545.4 1314.1,543.2" fill="#87706f" opacity=".6"/>
<polygon points="1345.0,448.5 1361.4,454.3 1361.5,500.8 1345.4,494.1" fill="#22272a" />
<polygon points="1347.8,470.5 1352.5,472.3 1352.6,491.6 1347.9,489.7" fill="#545d66" />
<polygon points="1354.1,472.9 1358.9,474.7 1358.9,494.2 1354.2,492.3" fill="#545d66" />
<polygon points="1347.8,470.5 1352.5,472.3 1352.6,482.9 1347.9,481.1" fill="#87706f" opacity=".6"/>
<polygon points="1345.4,501.9 1361.6,508.6 1361.7,539.2 1345.7,532.0" fill="#22272a" />
<polygon points="1348.1,512.0 1352.7,514.0 1352.8,531.6 1348.2,529.5" fill="#545d66" />
<polygon points="1354.4,514.7 1359.0,516.7 1359.1,534.4 1354.4,532.3" fill="#545d66" />
<polygon points="1348.1,512.0 1352.7,514.0 1352.8,523.7 1348.1,521.6" fill="#87706f" opacity=".6"/>
<polygon points="1345.7,540.2 1361.7,547.6 1361.8,577.2 1346.0,569.5" fill="#22272a" />
<polygon points="1348.3,550.2 1353.0,552.4 1353.1,569.4 1348.5,567.2" fill="#545d66" />
<polygon points="1354.5,553.1 1359.2,555.3 1359.2,572.4 1354.6,570.2" fill="#545d66" />
<polygon points="1348.3,550.2 1353.0,552.4 1353.0,561.7 1348.4,559.6" fill="#87706f" opacity=".6"/>
<polygon points="1370.7,457.5 1378.6,460.3 1378.5,507.8 1370.7,504.6" fill="#22272a" />
<polygon points="1372.0,479.6 1374.2,480.5 1374.2,500.4 1372.0,499.4" fill="#545d66" />
<polygon points="1375.0,480.8 1377.3,481.7 1377.3,501.6 1375.0,500.7" fill="#545d66" />
<polygon points="1372.0,479.6 1374.2,480.5 1374.2,491.4 1372.0,490.5" fill="#87706f" opacity=".6"/>
<polygon points="1370.7,512.4 1378.5,515.6 1378.4,546.8 1370.7,543.3" fill="#22272a" />
<polygon points="1372.0,522.2 1374.2,523.1 1374.2,541.1 1372.0,540.1" fill="#545d66" />
<polygon points="1375.0,523.5 1377.2,524.4 1377.2,542.5 1375.0,541.5" fill="#545d66" />
<polygon points="1372.0,522.2 1374.2,523.1 1374.2,533.0 1372.0,532.0" fill="#87706f" opacity=".6"/>
<polygon points="1370.7,551.7 1378.4,555.3 1378.4,585.2 1370.7,581.5" fill="#22272a" />
<polygon points="1372.0,561.3 1374.2,562.3 1374.2,579.6 1372.0,578.5" fill="#545d66" />
<polygon points="1374.9,562.7 1377.2,563.7 1377.1,581.0 1374.9,580.0" fill="#545d66" />
<polygon points="1372.0,561.3 1374.2,562.3 1374.2,571.8 1372.0,570.8" fill="#87706f" opacity=".6"/>
<polygon points="1074.7,382.7 1398.6,516.1 1398.5,524.0 1075.5,389.4" fill="#cdcdc4" />
<polygon points="1078.0,411.2 1398.3,555.7 1398.2,564.4 1078.7,417.1" fill="#cdcdc4" />
<path d="M1075.5 389.4 L1398.5 524.0" stroke="#8d8d86" stroke-width="0.8" />
<path d="M1078.7 417.1 L1398.2 564.4" stroke="#8d8d86" stroke-width="0.8" />
<path d="M1070.7 348.3 L1399.0 463.0" stroke="#8c8e98" stroke-width="1.3" />
<polygon points="1081.7,443.3 1398.0,597.0 1397.0,621.5 1083.6,459.2" fill="#25292c" />
<polygon points="1083.6,459.2 1397.0,621.5 1396.6,626.5 1084.0,462.6" fill="#bdbdb4" />
<polygon points="1116.0,427.0 1131.0,434.5 1131.0,439.5 1116.0,432.0" fill="#15181a" />
<polygon points="1116.0,427.0 1120.0,425.2 1135.0,432.5 1131.0,434.5" fill="#8a8d92" />
<polygon points="1107.0,470.0 1124.0,456.0 1135.0,459.0 1134.0,466.0 1120.0,476.0" fill="#7c7e82" />
<polygon points="1109.0,470.0 1122.0,460.0 1127.0,462.0 1115.0,473.0" fill="#a4a6aa" />
<path d="M1072.0 447.0 L1086.0 452.0" stroke="#8a8c90" stroke-width="0.7" />
<path d="M1072.0 447.0 L1074.0 486.0" stroke="#8a8c90" stroke-width="0.7" />
<path d="M1086.0 452.0 L1088.0 492.0" stroke="#8a8c90" stroke-width="0.7" />
<path d="M1074.0 486.0 L1088.0 492.0" stroke="#8a8c90" stroke-width="0.7" />
<path d="M1079.0 444.0 L1072.0 447.0" stroke="#8a8c90" stroke-width="0.7" />
<path d="M1074.0 466.0 L1088.0 471.0" stroke="#8a8c90" stroke-width="0.7" />
<path d="M1160.0 379.5 L1167.7 485.1" stroke="#8f8f92" stroke-width="0.9" />
<path d="M1281.0 421.8 L1284.3 541.8" stroke="#8f8f92" stroke-width="0.9" />
<clipPath id="rfc"><polygon points="1399.0,463.0 1443.6,441.0 1443.6,393.6 1632.1,311.4 1630.4,424.0 1545.5,465.5 1523.0,505.0 1399.0,597.0"/></clipPath>
<polygon points="1399.0,463.0 1443.6,441.0 1443.6,393.6 1632.1,311.4 1630.4,424.0 1545.5,465.5 1523.0,505.0 1399.0,597.0" fill="#cd6541" />
<g clip-path="url(#rfc)">
<polygon points="1505.7,369.7 1514.3,365.9 1513.8,447.3 1505.3,452.4" fill="#2d3237" />
<polygon points="1507.3,389.8 1512.4,387.3 1512.4,401.2 1507.2,403.8" fill="#8d7a80" />
<polygon points="1509.4,388.8 1510.3,388.4 1510.2,402.3 1509.4,402.7" fill="#1d2124" />
<polygon points="1507.1,431.4 1512.2,428.5 1512.1,444.8 1507.0,447.8" fill="#8d7a80" />
<polygon points="1509.2,430.2 1510.1,429.7 1510.0,446.1 1509.1,446.6" fill="#1d2124" />
<polygon points="1505.2,458.2 1513.8,453.0 1513.7,476.9 1505.1,482.6" fill="#2d3237" />
<polygon points="1506.9,465.1 1512.0,461.8 1512.0,476.2 1506.8,479.6" fill="#8d7a80" />
<polygon points="1509.0,463.7 1509.9,463.2 1509.8,477.6 1509.0,478.2" fill="#1d2124" />
<polygon points="1505.1,490.1 1513.6,484.2 1513.5,509.3 1504.9,515.6" fill="#2d3237" />
<polygon points="1506.7,497.2 1511.9,493.6 1511.8,508.6 1506.7,512.4" fill="#8d7a80" />
<polygon points="1508.9,495.7 1509.7,495.1 1509.6,510.2 1508.8,510.8" fill="#1d2124" />
<polygon points="1519.3,363.7 1527.9,359.9 1527.4,439.1 1518.8,444.2" fill="#2d3237" />
<polygon points="1520.9,383.2 1526.0,380.7 1525.9,394.2 1520.8,396.9" fill="#8d7a80" />
<polygon points="1523.0,382.2 1523.9,381.8 1523.8,395.3 1522.9,395.8" fill="#1d2124" />
<polygon points="1520.6,423.7 1525.8,420.8 1525.7,436.7 1520.5,439.7" fill="#8d7a80" />
<polygon points="1522.8,422.5 1523.6,422.0 1523.5,437.9 1522.7,438.5" fill="#1d2124" />
<polygon points="1518.8,449.9 1527.3,444.7 1527.2,467.8 1518.6,473.5" fill="#2d3237" />
<polygon points="1520.4,456.5 1525.6,453.3 1525.5,467.1 1520.3,470.6" fill="#8d7a80" />
<polygon points="1522.6,455.2 1523.4,454.6 1523.3,468.6 1522.5,469.1" fill="#1d2124" />
<polygon points="1518.6,480.8 1527.1,474.9 1527.0,499.2 1518.4,505.6" fill="#2d3237" />
<polygon points="1520.2,487.7 1525.4,484.1 1525.3,498.6 1520.2,502.4" fill="#8d7a80" />
<polygon points="1522.4,486.2 1523.2,485.6 1523.1,500.2 1522.3,500.8" fill="#1d2124" />
<polygon points="1533.6,357.4 1541.4,353.9 1540.8,430.9 1533.0,435.6" fill="#2d3237" />
<polygon points="1535.0,376.4 1539.7,374.1 1539.6,387.3 1534.9,389.7" fill="#8d7a80" />
<polygon points="1537.0,375.4 1537.7,375.1 1537.6,388.3 1536.9,388.7" fill="#1d2124" />
<polygon points="1534.7,415.7 1539.4,413.1 1539.3,428.5 1534.6,431.3" fill="#8d7a80" />
<polygon points="1536.7,414.6 1537.4,414.2 1537.3,429.7 1536.6,430.2" fill="#1d2124" />
<polygon points="1533.0,441.2 1540.8,436.4 1540.6,458.7 1532.8,463.9" fill="#2d3237" />
<polygon points="1534.5,447.6 1539.2,444.7 1539.1,458.1 1534.4,461.2" fill="#8d7a80" />
<polygon points="1536.4,446.4 1537.2,445.9 1537.1,459.4 1536.3,459.9" fill="#1d2124" />
<polygon points="1532.8,471.0 1540.6,465.7 1540.4,489.3 1532.6,495.0" fill="#2d3237" />
<polygon points="1534.3,477.8 1538.9,474.5 1538.8,488.6 1534.2,492.1" fill="#8d7a80" />
<polygon points="1536.2,476.4 1537.0,475.9 1536.9,490.0 1536.1,490.6" fill="#1d2124" />
<polygon points="1547.0,351.4 1553.6,348.5 1553.0,423.6 1546.4,427.6" fill="#2d3237" />
<polygon points="1548.1,370.0 1552.1,368.1 1552.0,380.9 1548.0,382.9" fill="#8d7a80" />
<polygon points="1549.8,369.2 1550.5,368.9 1550.4,381.7 1549.7,382.1" fill="#1d2124" />
<polygon points="1547.8,408.3 1551.8,406.1 1551.7,421.1 1547.7,423.5" fill="#8d7a80" />
<polygon points="1549.5,407.4 1550.1,407.0 1550.0,422.1 1549.4,422.5" fill="#1d2124" />
<polygon points="1546.3,433.0 1552.9,428.9 1552.7,450.6 1546.2,455.0" fill="#2d3237" />
<polygon points="1547.6,439.3 1551.5,436.8 1551.4,449.8 1547.5,452.4" fill="#8d7a80" />
<polygon points="1549.2,438.3 1549.9,437.9 1549.8,450.9 1549.1,451.3" fill="#1d2124" />
<polygon points="1546.1,461.9 1552.7,457.4 1552.5,480.3 1545.9,485.1" fill="#2d3237" />
<polygon points="1547.4,468.5 1551.3,465.8 1551.2,479.5 1547.3,482.4" fill="#8d7a80" />
<polygon points="1549.0,467.4 1549.7,466.9 1549.6,480.7 1548.9,481.2" fill="#1d2124" />
<polygon points="1560.0,345.6 1567.0,342.5 1566.3,415.5 1559.3,419.7" fill="#2d3237" />
<polygon points="1561.2,363.7 1565.4,361.6 1565.3,374.1 1561.1,376.2" fill="#8d7a80" />
<polygon points="1563.0,362.8 1563.7,362.5 1563.5,375.0 1562.8,375.3" fill="#1d2124" />
<polygon points="1560.9,400.9 1565.1,398.5 1564.9,413.2 1560.8,415.7" fill="#8d7a80" />
<polygon points="1562.6,399.9 1563.3,399.5 1563.2,414.2 1562.5,414.6" fill="#1d2124" />
<polygon points="1559.3,425.0 1566.3,420.7 1566.1,441.6 1559.1,446.3" fill="#2d3237" />
<polygon points="1560.6,431.1 1564.8,428.4 1564.7,440.9 1560.5,443.7" fill="#8d7a80" />
<polygon points="1562.4,430.0 1563.1,429.5 1562.9,442.1 1562.2,442.6" fill="#1d2124" />
<polygon points="1559.0,453.0 1566.0,448.2 1565.8,470.4 1558.8,475.5" fill="#2d3237" />
<polygon points="1560.4,459.4 1564.5,456.4 1564.4,469.7 1560.2,472.8" fill="#8d7a80" />
<polygon points="1562.1,458.1 1562.8,457.7 1562.7,471.0 1562.0,471.5" fill="#1d2124" />
<polygon points="1572.0,340.3 1578.6,337.4 1577.9,408.5 1571.3,412.5" fill="#2d3237" />
<polygon points="1573.1,357.9 1577.1,356.0 1577.0,368.1 1573.0,370.1" fill="#8d7a80" />
<polygon points="1574.8,357.1 1575.4,356.8 1575.3,369.0 1574.6,369.3" fill="#1d2124" />
<polygon points="1572.8,394.2 1576.7,391.9 1576.6,406.2 1572.6,408.6" fill="#8d7a80" />
<polygon points="1574.4,393.2 1575.1,392.9 1574.9,407.2 1574.3,407.6" fill="#1d2124" />
<polygon points="1571.2,417.7 1577.8,413.6 1577.6,433.8 1571.0,438.3" fill="#2d3237" />
<polygon points="1572.5,423.5 1576.4,421.0 1576.3,433.2 1572.4,435.8" fill="#8d7a80" />
<polygon points="1574.1,422.5 1574.8,422.1 1574.7,434.3 1574.0,434.7" fill="#1d2124" />
<polygon points="1571.0,444.8 1577.5,440.3 1577.3,461.8 1570.8,466.7" fill="#2d3237" />
<polygon points="1572.2,451.0 1576.1,448.2 1576.0,461.2 1572.1,464.1" fill="#8d7a80" />
<polygon points="1573.8,449.9 1574.5,449.4 1574.4,462.4 1573.7,462.9" fill="#1d2124" />
<polygon points="1582.9,335.5 1589.3,332.6 1588.5,402.1 1582.1,405.9" fill="#2d3237" />
<polygon points="1584.0,352.6 1587.8,350.8 1587.7,362.6 1583.8,364.6" fill="#8d7a80" />
<polygon points="1585.6,351.9 1586.2,351.6 1586.1,363.4 1585.4,363.8" fill="#1d2124" />
<polygon points="1583.6,388.0 1587.4,385.9 1587.3,399.8 1583.4,402.1" fill="#8d7a80" />
<polygon points="1585.2,387.1 1585.8,386.8 1585.7,400.8 1585.0,401.1" fill="#1d2124" />
<polygon points="1582.1,411.0 1588.5,407.1 1588.2,426.7 1581.9,431.0" fill="#2d3237" />
<polygon points="1583.3,416.7 1587.1,414.3 1587.0,426.1 1583.2,428.6" fill="#8d7a80" />
<polygon points="1584.9,415.7 1585.5,415.3 1585.4,427.1 1584.7,427.5" fill="#1d2124" />
<polygon points="1581.8,437.4 1588.2,433.0 1587.9,453.9 1581.6,458.7" fill="#2d3237" />
<polygon points="1583.0,443.4 1586.8,440.7 1586.7,453.3 1582.9,456.1" fill="#8d7a80" />
<polygon points="1584.6,442.3 1585.2,441.8 1585.1,454.5 1584.5,454.9" fill="#1d2124" />
<polygon points="1592.0,331.4 1598.6,328.5 1597.8,396.4 1591.2,400.4" fill="#2d3237" />
<polygon points="1593.1,348.2 1597.0,346.3 1596.9,357.9 1593.0,359.9" fill="#8d7a80" />
<polygon points="1594.7,347.4 1595.4,347.1 1595.3,358.7 1594.6,359.1" fill="#1d2124" />
<polygon points="1592.7,382.9 1596.6,380.7 1596.5,394.3 1592.5,396.7" fill="#8d7a80" />
<polygon points="1594.3,382.0 1595.0,381.6 1594.8,395.3 1594.2,395.7" fill="#1d2124" />
<polygon points="1591.1,405.4 1597.7,401.4 1597.5,420.5 1590.9,424.9" fill="#2d3237" />
<polygon points="1592.4,410.9 1596.3,408.4 1596.2,419.9 1592.2,422.5" fill="#8d7a80" />
<polygon points="1594.0,409.9 1594.7,409.5 1594.5,421.0 1593.9,421.4" fill="#1d2124" />
<polygon points="1590.8,431.1 1597.4,426.6 1597.2,447.1 1590.6,452.0" fill="#2d3237" />
<polygon points="1592.1,437.0 1596.0,434.2 1595.9,446.5 1591.9,449.4" fill="#8d7a80" />
<polygon points="1593.7,435.8 1594.4,435.4 1594.2,447.7 1593.6,448.2" fill="#1d2124" />
<polygon points="1450.7,412.3 1461.3,407.2 1461.3,440.1 1450.6,445.8" fill="#2d3237" />
<polygon points="1450.6,429.0 1461.3,423.6 1461.3,437.8 1450.6,443.5" fill="#14171a" />
<polygon points="1467.8,404.1 1478.5,399.0 1478.4,430.8 1467.7,436.6" fill="#2d3237" />
<polygon points="1467.8,420.3 1478.5,414.9 1478.4,428.6 1467.7,434.3" fill="#14171a" />
<polygon points="1484.2,396.2 1494.2,391.5 1494.1,422.4 1484.1,427.8" fill="#2d3237" />
<polygon points="1484.2,412.0 1494.1,406.9 1494.1,420.2 1484.1,425.6" fill="#14171a" />
<polygon points="1465.2,444.8 1475.4,439.2 1475.3,468.0 1465.1,474.2" fill="#2d3237" />
<polygon points="1486.8,429.8 1490.8,427.6 1490.7,450.9 1486.7,453.3" fill="#2d3237" />
<polygon points="1445.9,460.5 1452.4,456.9 1452.4,483.6 1445.8,487.6" fill="#2d3237" />
<polygon points="1445.8,494.8 1451.8,491.1 1451.7,517.9 1445.7,521.9" fill="#2d3237" />
<polygon points="1445.7,530.9 1451.7,526.8 1451.6,554.6 1445.7,559.0" fill="#2d3237" />
<polygon points="1462.7,484.4 1472.7,478.3 1472.6,503.9 1462.6,510.6" fill="#2d3237" />
<polygon points="1464.2,492.2 1471.2,487.8 1471.1,502.6 1464.1,507.3" fill="#7d7f88" />
<polygon points="1467.3,490.2 1468.1,489.7 1468.0,504.7 1467.2,505.2" fill="#1d2124" />
<polygon points="1462.6,519.3 1472.6,512.5 1472.5,539.1 1462.5,546.5" fill="#2d3237" />
<polygon points="1464.1,527.3 1471.0,522.4 1471.0,537.8 1464.0,543.0" fill="#7d7f88" />
<polygon points="1467.2,525.1 1468.0,524.6 1467.9,540.1 1467.1,540.7" fill="#1d2124" />
<polygon points="1477.7,475.2 1487.6,469.1 1487.5,493.9 1477.6,500.6" fill="#2d3237" />
<polygon points="1479.1,482.7 1486.1,478.3 1486.0,492.7 1479.1,497.3" fill="#7d7f88" />
<polygon points="1482.2,480.8 1483.0,480.2 1482.9,494.7 1482.1,495.3" fill="#1d2124" />
<polygon points="1477.5,509.0 1487.5,502.2 1487.4,528.1 1477.4,535.4" fill="#2d3237" />
<polygon points="1479.0,516.8 1485.9,511.9 1485.9,526.9 1478.9,532.0" fill="#7d7f88" />
<polygon points="1482.1,514.6 1482.9,514.1 1482.8,529.1 1482.0,529.7" fill="#1d2124" />
<polygon points="1495.6,464.2 1502.5,459.9 1502.4,483.9 1495.5,488.5" fill="#2d3237" />
<polygon points="1495.4,496.7 1502.4,492.0 1502.3,517.0 1495.3,522.2" fill="#2d3237" />
<polygon points="1602.7,340.6 1609.1,337.5 1608.9,351.0 1602.5,354.3" fill="#2d3237" />
<polygon points="1602.4,364.7 1608.8,361.3 1608.5,384.6 1602.1,388.4" fill="#2d3237" />
<polygon points="1601.9,402.8 1608.3,398.8 1608.1,411.9 1601.8,416.2" fill="#2d3237" />
<polygon points="1611.2,336.5 1616.8,333.8 1616.6,347.1 1611.0,350.0" fill="#2d3237" />
<polygon points="1610.9,360.2 1616.5,357.2 1616.2,380.1 1610.6,383.4" fill="#2d3237" />
<polygon points="1610.4,397.5 1616.0,394.0 1615.8,406.8 1610.2,410.5" fill="#2d3237" />
<polygon points="1619.8,332.4 1625.5,329.7 1625.3,342.7 1619.6,345.6" fill="#2d3237" />
<polygon points="1619.5,355.6 1625.1,352.6 1624.8,374.9 1619.1,378.3" fill="#2d3237" />
<polygon points="1619.0,392.2 1624.6,388.6 1624.4,401.0 1618.8,404.8" fill="#2d3237" />
<polygon points="1399.0,516.8 1631.1,376.3 1631.1,380.9 1399.0,523.6" fill="#e4e4ea" />
<polygon points="1399.0,556.6 1630.8,399.6 1630.7,403.7 1399.0,563.0" fill="#e4e4ea" />
</g>
<path d="M1443.6 393.6 L1632.1 311.4" stroke="#8c8e98" stroke-width="1.3" />
<path d="M1399.0 463.0 L1443.6 441.0" stroke="#8c8e98" stroke-width="1.3" />
<path d="M1444.5 394.0 L1444.5 441.0" stroke="#8a4025" stroke-width="0.8" />
<path d="M1403.5 462.0 L1402.0 600.0" stroke="#9a9a9c" stroke-width="1" />
<path d="M1511.0 368.0 L1505.0 520.0" stroke="#9a9a9c" stroke-width="0.9" />
<polygon points="1523.0,470.0 1546.0,458.0 1546.0,500.0 1523.0,513.0" fill="#2f3338" />
<rect x="1525.4" y="510.0" width="3.2" height="34.0" fill="#bcbcb6"/><rect x="1527.7" y="510.0" width="0.9" height="34.0" fill="#6f6f68"/><polygon points="1525.4,544.0 1528.6,544.0 1527.0,546.2" fill="#bcbcb6"/><rect x="1534.0" y="505.0" width="3.1" height="33.0" fill="#bcbcb6"/><rect x="1536.1" y="505.0" width="0.9" height="33.0" fill="#6f6f68"/><polygon points="1534.0,538.0 1537.0,538.0 1535.5,540.2" fill="#bcbcb6"/><rect x="1542.5" y="500.0" width="3.0" height="32.0" fill="#bcbcb6"/><rect x="1544.6" y="500.0" width="0.9" height="32.0" fill="#6f6f68"/><polygon points="1542.5,532.0 1545.5,532.0 1544.0,534.2" fill="#bcbcb6"/>
<polygon points="1399.0,597.0 1523.0,505.0 1523.0,528.0 1518.6,541.0 1398.0,621.5" fill="#2a2e32" />
<polygon points="1398.0,621.5 1518.6,541.0 1519.0,545.5 1397.6,626.5" fill="#bdbdb4" />
<polygon points="1545.5,465.5 1630.4,424.0 1630.6,438.0 1546.0,487.5" fill="#2a2e32" />
<polygon points="1546.0,487.5 1630.6,438.0 1631.0,441.5 1546.4,491.5" fill="#bdbdb4" />
<polygon points="1628.6,332.0 1637.0,328.5 1645.0,335.0 1642.0,424.0 1630.4,424.0" fill="#c9603c" />
<polygon points="1630.4,424.0 1642.0,424.0 1642.0,436.0 1630.6,438.0" fill="#2a2e32" />
<polygon points="1627.6,378.4 1645.0,367.8 1645.0,372.3 1627.6,383.0" fill="#e4e4ea" />
<polygon points="1627.3,401.9 1644.7,390.1 1644.6,394.2 1627.2,406.1" fill="#e4e4ea" />
<polygon points="1423.2,539.9 1432.2,546.3 1432.2,554.3 1423.2,547.9" fill="#121517" /><polygon points="1432.2,546.3 1468.0,522.0 1468.0,530.0 1432.2,554.3" fill="#1c2023" /><polygon points="1423.2,539.9 1459.0,516.9 1468.0,522.0 1432.2,546.3" fill="#a7aab8" />
<polygon points="1581.5,433.0 1589.0,437.0 1589.0,441.5 1581.5,437.5" fill="#121517" /><polygon points="1589.0,437.0 1611.5,423.0 1611.5,427.5 1589.0,441.5" fill="#1c2023" /><polygon points="1581.5,433.0 1604.0,419.5 1611.5,423.0 1589.0,437.0" fill="#a7aab8" />
<polygon points="1428.0,591.0 1457.0,562.0 1466.0,566.0 1466.0,574.0 1440.0,596.0" fill="#93959b" />
<polygon points="1457.0,552.0 1466.0,556.0 1466.0,566.0 1457.0,562.0" fill="#6d7075" />
<polygon points="1583.0,468.0 1603.0,449.0 1611.0,452.0 1611.0,458.0 1592.0,473.0" fill="#93959b" />
<path d="M1127.9 364.3 L1167.9 352.9" stroke="#6b6f7c" stroke-width="0.9"/><circle cx="1137.9" cy="361.4" r="0.9" fill="#2c2f36"/><circle cx="1147.9" cy="358.6" r="0.9" fill="#2c2f36"/><circle cx="1157.9" cy="355.7" r="0.9" fill="#2c2f36"/>
<path d="M1167.9 352.9 L1307.9 400.0" stroke="#6b6f7c" stroke-width="0.9"/><circle cx="1176.6" cy="355.8" r="0.9" fill="#2c2f36"/><circle cx="1185.4" cy="358.8" r="0.9" fill="#2c2f36"/><circle cx="1194.1" cy="361.7" r="0.9" fill="#2c2f36"/><circle cx="1202.9" cy="364.6" r="0.9" fill="#2c2f36"/><circle cx="1211.6" cy="367.6" r="0.9" fill="#2c2f36"/><circle cx="1220.4" cy="370.5" r="0.9" fill="#2c2f36"/><circle cx="1229.1" cy="373.5" r="0.9" fill="#2c2f36"/><circle cx="1237.9" cy="376.4" r="0.9" fill="#2c2f36"/><circle cx="1246.6" cy="379.4" r="0.9" fill="#2c2f36"/><circle cx="1255.4" cy="382.3" r="0.9" fill="#2c2f36"/><circle cx="1264.1" cy="385.3" r="0.9" fill="#2c2f36"/><circle cx="1272.9" cy="388.2" r="0.9" fill="#2c2f36"/><circle cx="1281.6" cy="391.2" r="0.9" fill="#2c2f36"/><circle cx="1290.4" cy="394.1" r="0.9" fill="#2c2f36"/><circle cx="1299.1" cy="397.1" r="0.9" fill="#2c2f36"/>
<path d="M1170.7 378.6 L1249.3 355.7" stroke="#6b6f7c" stroke-width="0.9"/><circle cx="1179.4" cy="376.0" r="0.9" fill="#2c2f36"/><circle cx="1188.2" cy="373.5" r="0.9" fill="#2c2f36"/><circle cx="1196.9" cy="371.0" r="0.9" fill="#2c2f36"/><circle cx="1205.6" cy="368.4" r="0.9" fill="#2c2f36"/><circle cx="1214.4" cy="365.9" r="0.9" fill="#2c2f36"/><circle cx="1223.1" cy="363.3" r="0.9" fill="#2c2f36"/><circle cx="1231.8" cy="360.8" r="0.9" fill="#2c2f36"/><circle cx="1240.6" cy="358.3" r="0.9" fill="#2c2f36"/>
<path d="M1216.4 396.4 L1302.1 368.6" stroke="#6b6f7c" stroke-width="0.9"/><circle cx="1225.0" cy="393.6" r="0.9" fill="#2c2f36"/><circle cx="1233.6" cy="390.9" r="0.9" fill="#2c2f36"/><circle cx="1242.1" cy="388.1" r="0.9" fill="#2c2f36"/><circle cx="1250.7" cy="385.3" r="0.9" fill="#2c2f36"/><circle cx="1259.3" cy="382.5" r="0.9" fill="#2c2f36"/><circle cx="1267.9" cy="379.7" r="0.9" fill="#2c2f36"/><circle cx="1276.4" cy="376.9" r="0.9" fill="#2c2f36"/><circle cx="1285.0" cy="374.1" r="0.9" fill="#2c2f36"/><circle cx="1293.6" cy="371.4" r="0.9" fill="#2c2f36"/>
<path d="M1270.7 415.7 L1307.9 401.4" stroke="#6b6f7c" stroke-width="0.9"/><circle cx="1280.0" cy="412.1" r="0.9" fill="#2c2f36"/><circle cx="1289.3" cy="408.6" r="0.9" fill="#2c2f36"/><circle cx="1298.6" cy="405.0" r="0.9" fill="#2c2f36"/>
<path d="M1150.7 357.1 L1193.6 345.7" stroke="#6b6f7c" stroke-width="0.9"/><circle cx="1161.4" cy="354.3" r="0.9" fill="#2c2f36"/><circle cx="1172.1" cy="351.4" r="0.9" fill="#2c2f36"/><circle cx="1182.9" cy="348.6" r="0.9" fill="#2c2f36"/>
<path d="M1100.7 354.3 L1145.0 342.9" stroke="#6b6f7c" stroke-width="0.9"/><circle cx="1109.6" cy="352.0" r="0.9" fill="#2c2f36"/><circle cx="1118.4" cy="349.7" r="0.9" fill="#2c2f36"/><circle cx="1127.3" cy="347.4" r="0.9" fill="#2c2f36"/><circle cx="1136.1" cy="345.1" r="0.9" fill="#2c2f36"/>
<path d="M1131.7 360.0 L1150.0 356.7" stroke="#6b6f7c" stroke-width="0.9"/><circle cx="1140.8" cy="358.3" r="0.9" fill="#2c2f36"/>
<path d="M1441.4 342.9 L1517.1 320.7" stroke="#6b6f7c" stroke-width="0.9"/><circle cx="1450.9" cy="340.1" r="0.9" fill="#2c2f36"/><circle cx="1460.4" cy="337.3" r="0.9" fill="#2c2f36"/><circle cx="1469.8" cy="334.6" r="0.9" fill="#2c2f36"/><circle cx="1479.3" cy="331.8" r="0.9" fill="#2c2f36"/><circle cx="1488.8" cy="329.0" r="0.9" fill="#2c2f36"/><circle cx="1498.2" cy="326.2" r="0.9" fill="#2c2f36"/><circle cx="1507.7" cy="323.5" r="0.9" fill="#2c2f36"/>
<path d="M1517.1 320.7 L1550.0 313.6" stroke="#6b6f7c" stroke-width="0.9"/><circle cx="1528.1" cy="318.3" r="0.9" fill="#2c2f36"/><circle cx="1539.0" cy="316.0" r="0.9" fill="#2c2f36"/>
<path d="M1480.0 330.0 L1551.4 341.4" stroke="#6b6f7c" stroke-width="0.9"/><circle cx="1488.9" cy="331.4" r="0.9" fill="#2c2f36"/><circle cx="1497.9" cy="332.9" r="0.9" fill="#2c2f36"/><circle cx="1506.8" cy="334.3" r="0.9" fill="#2c2f36"/><circle cx="1515.7" cy="335.7" r="0.9" fill="#2c2f36"/><circle cx="1524.6" cy="337.1" r="0.9" fill="#2c2f36"/><circle cx="1533.6" cy="338.6" r="0.9" fill="#2c2f36"/><circle cx="1542.5" cy="340.0" r="0.9" fill="#2c2f36"/>
<path d="M1445.7 345.0 L1515.7 358.6" stroke="#6b6f7c" stroke-width="0.9"/><circle cx="1455.7" cy="346.9" r="0.9" fill="#2c2f36"/><circle cx="1465.7" cy="348.9" r="0.9" fill="#2c2f36"/><circle cx="1475.7" cy="350.8" r="0.9" fill="#2c2f36"/><circle cx="1485.7" cy="352.8" r="0.9" fill="#2c2f36"/><circle cx="1495.7" cy="354.7" r="0.9" fill="#2c2f36"/><circle cx="1505.7" cy="356.6" r="0.9" fill="#2c2f36"/>
<path d="M1515.7 358.6 L1571.4 330.7" stroke="#6b6f7c" stroke-width="0.9"/><circle cx="1525.0" cy="353.9" r="0.9" fill="#2c2f36"/><circle cx="1534.3" cy="349.3" r="0.9" fill="#2c2f36"/><circle cx="1543.6" cy="344.6" r="0.9" fill="#2c2f36"/><circle cx="1552.9" cy="340.0" r="0.9" fill="#2c2f36"/><circle cx="1562.1" cy="335.4" r="0.9" fill="#2c2f36"/>
<path d="M1425.7 367.9 L1468.6 350.7" stroke="#6b6f7c" stroke-width="0.9"/><circle cx="1434.3" cy="364.4" r="0.9" fill="#2c2f36"/><circle cx="1442.9" cy="361.0" r="0.9" fill="#2c2f36"/><circle cx="1451.4" cy="357.6" r="0.9" fill="#2c2f36"/><circle cx="1460.0" cy="354.1" r="0.9" fill="#2c2f36"/>
<path d="M1468.6 350.7 L1502.9 335.7" stroke="#6b6f7c" stroke-width="0.9"/><circle cx="1477.1" cy="347.0" r="0.9" fill="#2c2f36"/><circle cx="1485.7" cy="343.2" r="0.9" fill="#2c2f36"/><circle cx="1494.3" cy="339.5" r="0.9" fill="#2c2f36"/>
<path d="M1502.9 335.7 L1540.0 323.6" stroke="#6b6f7c" stroke-width="0.9"/><circle cx="1512.1" cy="332.7" r="0.9" fill="#2c2f36"/><circle cx="1521.4" cy="329.6" r="0.9" fill="#2c2f36"/><circle cx="1530.7" cy="326.6" r="0.9" fill="#2c2f36"/>
<path d="M1427.1 367.1 L1467.1 375.7" stroke="#6b6f7c" stroke-width="0.9"/><circle cx="1437.1" cy="369.3" r="0.9" fill="#2c2f36"/><circle cx="1447.1" cy="371.4" r="0.9" fill="#2c2f36"/><circle cx="1457.1" cy="373.6" r="0.9" fill="#2c2f36"/>
<path d="M1508.6 317.9 L1542.9 324.3" stroke="#6b6f7c" stroke-width="0.9"/><circle cx="1520.0" cy="320.0" r="0.9" fill="#2c2f36"/><circle cx="1531.4" cy="322.1" r="0.9" fill="#2c2f36"/>
<path d="M1542.9 324.3 L1570.0 328.6" stroke="#6b6f7c" stroke-width="0.9"/><circle cx="1551.9" cy="325.7" r="0.9" fill="#2c2f36"/><circle cx="1561.0" cy="327.1" r="0.9" fill="#2c2f36"/>
<path d="M1254.3 322.9 L1291.4 312.9" stroke="#6b6f7c" stroke-width="0.9"/><circle cx="1263.6" cy="320.4" r="0.9" fill="#2c2f36"/><circle cx="1272.9" cy="317.9" r="0.9" fill="#2c2f36"/><circle cx="1282.1" cy="315.4" r="0.9" fill="#2c2f36"/>
<path d="M1291.4 312.9 L1321.4 305.7" stroke="#6b6f7c" stroke-width="0.9"/><circle cx="1301.4" cy="310.5" r="0.9" fill="#2c2f36"/><circle cx="1311.4" cy="308.1" r="0.9" fill="#2c2f36"/>
<path d="M1358.6 307.1 L1414.3 311.4" stroke="#6b6f7c" stroke-width="0.9"/><circle cx="1367.9" cy="307.9" r="0.9" fill="#2c2f36"/><circle cx="1377.1" cy="308.6" r="0.9" fill="#2c2f36"/><circle cx="1386.4" cy="309.3" r="0.9" fill="#2c2f36"/><circle cx="1395.7" cy="310.0" r="0.9" fill="#2c2f36"/><circle cx="1405.0" cy="310.7" r="0.9" fill="#2c2f36"/>
<path d="M1414.3 311.4 L1472.9 317.1" stroke="#6b6f7c" stroke-width="0.9"/><circle cx="1424.0" cy="312.4" r="0.9" fill="#2c2f36"/><circle cx="1433.8" cy="313.3" r="0.9" fill="#2c2f36"/><circle cx="1443.6" cy="314.3" r="0.9" fill="#2c2f36"/><circle cx="1453.3" cy="315.2" r="0.9" fill="#2c2f36"/><circle cx="1463.1" cy="316.2" r="0.9" fill="#2c2f36"/>
<path d="M1391.4 315.7 L1414.3 311.4" stroke="#6b6f7c" stroke-width="0.9"/><circle cx="1402.9" cy="313.6" r="0.9" fill="#2c2f36"/>
<path d="M1414.3 311.4 L1452.9 302.9" stroke="#6b6f7c" stroke-width="0.9"/><circle cx="1423.9" cy="309.3" r="0.9" fill="#2c2f36"/><circle cx="1433.6" cy="307.1" r="0.9" fill="#2c2f36"/><circle cx="1443.2" cy="305.0" r="0.9" fill="#2c2f36"/>
<path d="M1230.0 332.9 L1277.1 327.1" stroke="#6b6f7c" stroke-width="0.9"/><circle cx="1239.4" cy="331.7" r="0.9" fill="#2c2f36"/><circle cx="1248.9" cy="330.6" r="0.9" fill="#2c2f36"/><circle cx="1258.3" cy="329.4" r="0.9" fill="#2c2f36"/><circle cx="1267.7" cy="328.3" r="0.9" fill="#2c2f36"/>
<path d="M1255.7 322.9 L1290.0 331.4" stroke="#6b6f7c" stroke-width="0.9"/><circle cx="1267.1" cy="325.7" r="0.9" fill="#2c2f36"/><circle cx="1278.6" cy="328.6" r="0.9" fill="#2c2f36"/>
<rect x="1123.6" y="344.2" width="12.0" height="9.8" fill="#7d7f85"/><rect x="1123.6" y="341.0" width="1.8" height="13.0" fill="#b3b4b8"/><rect x="1126.6" y="342.6" width="1.8" height="11.4" fill="#96989d"/><rect x="1129.6" y="341.0" width="1.8" height="13.0" fill="#b3b4b8"/><rect x="1132.6" y="342.6" width="1.8" height="11.4" fill="#96989d"/><rect x="1123.0" y="344.9" width="13.2" height="1.1" fill="#bfc0c3"/>
<rect x="1141.0" y="346.8" width="11.0" height="8.2" fill="#7d7f85"/><rect x="1141.0" y="344.0" width="1.6" height="11.0" fill="#b3b4b8"/><rect x="1143.8" y="345.3" width="1.6" height="9.7" fill="#96989d"/><rect x="1146.5" y="344.0" width="1.6" height="11.0" fill="#b3b4b8"/><rect x="1149.2" y="345.3" width="1.6" height="9.7" fill="#96989d"/><rect x="1140.4" y="347.3" width="12.2" height="1.1" fill="#bfc0c3"/>
<rect x="1174.0" y="356.5" width="13.0" height="13.5" fill="#7d7f85"/><rect x="1174.0" y="352.0" width="1.6" height="18.0" fill="#b3b4b8"/><rect x="1176.6" y="354.2" width="1.6" height="15.8" fill="#96989d"/><rect x="1179.2" y="352.0" width="1.6" height="18.0" fill="#b3b4b8"/><rect x="1181.8" y="354.2" width="1.6" height="15.8" fill="#96989d"/><rect x="1184.4" y="352.0" width="1.6" height="18.0" fill="#b3b4b8"/><rect x="1173.4" y="357.4" width="14.2" height="1.1" fill="#bfc0c3"/>
<rect x="1181.0" y="345.0" width="11.0" height="12.0" fill="#7d7f85"/><rect x="1181.0" y="341.0" width="1.6" height="16.0" fill="#b3b4b8"/><rect x="1183.8" y="342.9" width="1.6" height="14.1" fill="#96989d"/><rect x="1186.5" y="341.0" width="1.6" height="16.0" fill="#b3b4b8"/><rect x="1189.2" y="342.9" width="1.6" height="14.1" fill="#96989d"/><rect x="1180.4" y="345.8" width="12.2" height="1.1" fill="#bfc0c3"/>
<rect x="1214.0" y="369.0" width="13.0" height="15.0" fill="#7d7f85"/><rect x="1214.0" y="364.0" width="1.6" height="20.0" fill="#b3b4b8"/><rect x="1216.6" y="366.4" width="1.6" height="17.6" fill="#96989d"/><rect x="1219.2" y="364.0" width="1.6" height="20.0" fill="#b3b4b8"/><rect x="1221.8" y="366.4" width="1.6" height="17.6" fill="#96989d"/><rect x="1224.4" y="364.0" width="1.6" height="20.0" fill="#b3b4b8"/><rect x="1213.4" y="370.0" width="14.2" height="1.1" fill="#bfc0c3"/>
<rect x="1234.0" y="364.8" width="21.0" height="17.2" fill="#7d7f85"/><rect x="1234.0" y="359.0" width="1.6" height="23.0" fill="#b3b4b8"/><rect x="1236.6" y="361.8" width="1.6" height="20.2" fill="#96989d"/><rect x="1239.2" y="359.0" width="1.6" height="23.0" fill="#b3b4b8"/><rect x="1241.9" y="361.8" width="1.6" height="20.2" fill="#96989d"/><rect x="1244.5" y="359.0" width="1.6" height="23.0" fill="#b3b4b8"/><rect x="1247.1" y="361.8" width="1.6" height="20.2" fill="#96989d"/><rect x="1249.8" y="359.0" width="1.6" height="23.0" fill="#b3b4b8"/><rect x="1252.4" y="361.8" width="1.6" height="20.2" fill="#96989d"/><rect x="1233.4" y="365.9" width="22.2" height="1.1" fill="#bfc0c3"/>
<rect x="1216.0" y="349.2" width="10.0" height="6.8" fill="#7d7f85"/><rect x="1216.0" y="347.0" width="2.0" height="9.0" fill="#b3b4b8"/><rect x="1219.3" y="348.1" width="2.0" height="7.9" fill="#96989d"/><rect x="1222.7" y="347.0" width="2.0" height="9.0" fill="#b3b4b8"/><rect x="1215.4" y="349.7" width="11.2" height="1.1" fill="#bfc0c3"/>
<rect x="1230.0" y="348.5" width="12.0" height="7.5" fill="#7d7f85"/><rect x="1230.0" y="346.0" width="1.8" height="10.0" fill="#b3b4b8"/><rect x="1233.0" y="347.2" width="1.8" height="8.8" fill="#96989d"/><rect x="1236.0" y="346.0" width="1.8" height="10.0" fill="#b3b4b8"/><rect x="1239.0" y="347.2" width="1.8" height="8.8" fill="#96989d"/><rect x="1229.4" y="349.0" width="13.2" height="1.1" fill="#bfc0c3"/>
<rect x="1244.0" y="351.0" width="9.0" height="6.0" fill="#7d7f85"/><rect x="1244.0" y="349.0" width="1.8" height="8.0" fill="#b3b4b8"/><rect x="1247.0" y="350.0" width="1.8" height="7.0" fill="#96989d"/><rect x="1250.0" y="349.0" width="1.8" height="8.0" fill="#b3b4b8"/><rect x="1243.4" y="351.4" width="10.2" height="1.1" fill="#bfc0c3"/>
<rect x="1268.0" y="367.2" width="10.0" height="18.8" fill="#7d7f85"/><rect x="1268.0" y="361.0" width="2.0" height="25.0" fill="#b3b4b8"/><rect x="1271.3" y="364.0" width="2.0" height="22.0" fill="#96989d"/><rect x="1274.7" y="361.0" width="2.0" height="25.0" fill="#b3b4b8"/><rect x="1267.4" y="368.5" width="11.2" height="1.1" fill="#bfc0c3"/>
<rect x="1277.0" y="414.2" width="8.0" height="6.8" fill="#7d7f85"/><rect x="1277.0" y="412.0" width="1.6" height="9.0" fill="#b3b4b8"/><rect x="1279.7" y="413.1" width="1.6" height="7.9" fill="#96989d"/><rect x="1282.3" y="412.0" width="1.6" height="9.0" fill="#b3b4b8"/><rect x="1276.4" y="414.7" width="9.2" height="1.1" fill="#bfc0c3"/>
<rect x="1287.0" y="417.2" width="8.0" height="6.8" fill="#7d7f85"/><rect x="1287.0" y="415.0" width="1.6" height="9.0" fill="#b3b4b8"/><rect x="1289.7" y="416.1" width="1.6" height="7.9" fill="#96989d"/><rect x="1292.3" y="415.0" width="1.6" height="9.0" fill="#b3b4b8"/><rect x="1286.4" y="417.7" width="9.2" height="1.1" fill="#bfc0c3"/>
<rect x="1108.0" y="343.0" width="9.0" height="9.0" fill="#7d7f85"/><rect x="1108.0" y="340.0" width="1.8" height="12.0" fill="#b3b4b8"/><rect x="1111.0" y="341.4" width="1.8" height="10.6" fill="#96989d"/><rect x="1114.0" y="340.0" width="1.8" height="12.0" fill="#b3b4b8"/><rect x="1107.4" y="343.6" width="10.2" height="1.1" fill="#bfc0c3"/>
<rect x="1333.3" y="292.8" width="10.0" height="8.2" fill="#7d7f85"/><rect x="1333.3" y="290.0" width="2.0" height="11.0" fill="#b3b4b8"/><rect x="1336.7" y="291.3" width="2.0" height="9.7" fill="#96989d"/><rect x="1340.0" y="290.0" width="2.0" height="11.0" fill="#b3b4b8"/><rect x="1332.7" y="293.3" width="11.2" height="1.1" fill="#bfc0c3"/>
<rect x="1378.3" y="301.1" width="10.0" height="8.2" fill="#7d7f85"/><rect x="1378.3" y="298.3" width="2.0" height="11.0" fill="#b3b4b8"/><rect x="1381.7" y="299.7" width="2.0" height="9.7" fill="#96989d"/><rect x="1385.0" y="298.3" width="2.0" height="11.0" fill="#b3b4b8"/><rect x="1377.7" y="301.6" width="11.2" height="1.1" fill="#bfc0c3"/>
<rect x="1415.0" y="307.8" width="10.0" height="8.2" fill="#7d7f85"/><rect x="1415.0" y="305.0" width="2.0" height="11.0" fill="#b3b4b8"/><rect x="1418.3" y="306.3" width="2.0" height="9.7" fill="#96989d"/><rect x="1421.7" y="305.0" width="2.0" height="11.0" fill="#b3b4b8"/><rect x="1414.4" y="308.3" width="11.2" height="1.1" fill="#bfc0c3"/>
<rect x="1441.7" y="312.8" width="10.0" height="8.2" fill="#7d7f85"/><rect x="1441.7" y="310.0" width="2.0" height="11.0" fill="#b3b4b8"/><rect x="1445.0" y="311.3" width="2.0" height="9.7" fill="#96989d"/><rect x="1448.3" y="310.0" width="2.0" height="11.0" fill="#b3b4b8"/><rect x="1441.1" y="313.3" width="11.2" height="1.1" fill="#bfc0c3"/>
<rect x="1378.3" y="349.4" width="10.0" height="8.2" fill="#7d7f85"/><rect x="1378.3" y="346.7" width="2.0" height="11.0" fill="#b3b4b8"/><rect x="1381.7" y="348.0" width="2.0" height="9.7" fill="#96989d"/><rect x="1385.0" y="346.7" width="2.0" height="11.0" fill="#b3b4b8"/><rect x="1377.7" y="350.0" width="11.2" height="1.1" fill="#bfc0c3"/>
<rect x="1398.3" y="354.4" width="10.0" height="8.2" fill="#7d7f85"/><rect x="1398.3" y="351.7" width="2.0" height="11.0" fill="#b3b4b8"/><rect x="1401.7" y="353.0" width="2.0" height="9.7" fill="#96989d"/><rect x="1405.0" y="351.7" width="2.0" height="11.0" fill="#b3b4b8"/><rect x="1397.7" y="355.0" width="11.2" height="1.1" fill="#bfc0c3"/>
<rect x="1410.0" y="363.8" width="10.0" height="8.2" fill="#7d7f85"/><rect x="1410.0" y="361.0" width="2.0" height="11.0" fill="#b3b4b8"/><rect x="1413.3" y="362.3" width="2.0" height="9.7" fill="#96989d"/><rect x="1416.7" y="361.0" width="2.0" height="11.0" fill="#b3b4b8"/><rect x="1409.4" y="364.3" width="11.2" height="1.1" fill="#bfc0c3"/>
<rect x="1445.0" y="362.8" width="10.0" height="8.2" fill="#7d7f85"/><rect x="1445.0" y="360.0" width="2.0" height="11.0" fill="#b3b4b8"/><rect x="1448.3" y="361.3" width="2.0" height="9.7" fill="#96989d"/><rect x="1451.7" y="360.0" width="2.0" height="11.0" fill="#b3b4b8"/><rect x="1444.4" y="363.3" width="11.2" height="1.1" fill="#bfc0c3"/>
<rect x="1463.3" y="366.1" width="10.0" height="8.2" fill="#7d7f85"/><rect x="1463.3" y="363.3" width="2.0" height="11.0" fill="#b3b4b8"/><rect x="1466.7" y="364.7" width="2.0" height="9.7" fill="#96989d"/><rect x="1470.0" y="363.3" width="2.0" height="11.0" fill="#b3b4b8"/><rect x="1462.7" y="366.6" width="11.2" height="1.1" fill="#bfc0c3"/>
<rect x="1488.3" y="301.1" width="10.0" height="8.2" fill="#7d7f85"/><rect x="1488.3" y="298.3" width="2.0" height="11.0" fill="#b3b4b8"/><rect x="1491.7" y="299.7" width="2.0" height="9.7" fill="#96989d"/><rect x="1495.0" y="298.3" width="2.0" height="11.0" fill="#b3b4b8"/><rect x="1487.7" y="301.6" width="11.2" height="1.1" fill="#bfc0c3"/>
<rect x="1545.0" y="316.1" width="10.0" height="8.2" fill="#7d7f85"/><rect x="1545.0" y="313.3" width="2.0" height="11.0" fill="#b3b4b8"/><rect x="1548.3" y="314.7" width="2.0" height="9.7" fill="#96989d"/><rect x="1551.7" y="313.3" width="2.0" height="11.0" fill="#b3b4b8"/><rect x="1544.4" y="316.6" width="11.2" height="1.1" fill="#bfc0c3"/>
<rect x="1568.3" y="321.1" width="10.0" height="8.2" fill="#7d7f85"/><rect x="1568.3" y="318.3" width="2.0" height="11.0" fill="#b3b4b8"/><rect x="1571.7" y="319.7" width="2.0" height="9.7" fill="#96989d"/><rect x="1575.0" y="318.3" width="2.0" height="11.0" fill="#b3b4b8"/><rect x="1567.7" y="321.6" width="11.2" height="1.1" fill="#bfc0c3"/>
<rect x="1288.3" y="312.8" width="10.0" height="8.2" fill="#7d7f85"/><rect x="1288.3" y="310.0" width="2.0" height="11.0" fill="#b3b4b8"/><rect x="1291.7" y="311.3" width="2.0" height="9.7" fill="#96989d"/><rect x="1295.0" y="310.0" width="2.0" height="11.0" fill="#b3b4b8"/><rect x="1287.7" y="313.3" width="11.2" height="1.1" fill="#bfc0c3"/>
<rect x="1235.0" y="321.1" width="10.0" height="8.2" fill="#7d7f85"/><rect x="1235.0" y="318.3" width="2.0" height="11.0" fill="#b3b4b8"/><rect x="1238.3" y="319.7" width="2.0" height="9.7" fill="#96989d"/><rect x="1241.7" y="318.3" width="2.0" height="11.0" fill="#b3b4b8"/><rect x="1234.4" y="321.6" width="11.2" height="1.1" fill="#bfc0c3"/>
<rect x="1520.3" y="311.3" width="6.0" height="6.0" fill="#7d7f85"/><rect x="1520.3" y="309.3" width="1.8" height="8.0" fill="#b3b4b8"/><rect x="1523.3" y="310.3" width="1.8" height="7.0" fill="#96989d"/><rect x="1519.7" y="311.7" width="7.2" height="1.1" fill="#bfc0c3"/>
<rect x="1560.3" y="314.0" width="6.0" height="6.0" fill="#7d7f85"/><rect x="1560.3" y="312.0" width="1.8" height="8.0" fill="#b3b4b8"/><rect x="1563.3" y="313.0" width="1.8" height="7.0" fill="#96989d"/><rect x="1559.7" y="314.4" width="7.2" height="1.1" fill="#bfc0c3"/>
<rect x="1593.7" y="309.7" width="6.0" height="6.0" fill="#7d7f85"/><rect x="1593.7" y="307.7" width="1.8" height="8.0" fill="#b3b4b8"/><rect x="1596.7" y="308.6" width="1.8" height="7.0" fill="#96989d"/><rect x="1593.1" y="310.1" width="7.2" height="1.1" fill="#bfc0c3"/>
<path d="M1268.5 372 Q1268.5 361 1273.5 361 Q1278.5 361 1278.5 372 V386 H1268.5 Z" fill="#b9babd"/><rect x="1268" y="376" width="11" height="1.2" fill="#7d7f84"/>
<path d="M1142.7 316.7 L1146.7 347.3" stroke="#8e9094" stroke-width="1"/><path d="M1143.2 348.5 L1146.7 344.3 L1150.2 348.5 Z" fill="#7a7c80"/>
<path d="M1198.3 306.7 L1200.0 339.3" stroke="#8e9094" stroke-width="1"/><path d="M1196.5 340.5 L1200.0 336.3 L1203.5 340.5 Z" fill="#7a7c80"/>
<path d="M1245.7 296.7 L1246.7 326.0" stroke="#8e9094" stroke-width="1"/><path d="M1243.2 327.2 L1246.7 323.0 L1250.2 327.2 Z" fill="#7a7c80"/>
<path d="M1290.7 288.3 L1291.7 313.3" stroke="#8e9094" stroke-width="1"/><path d="M1288.2 314.5 L1291.7 310.3 L1295.2 314.5 Z" fill="#7a7c80"/>
<path d="M1339.3 280.0 L1340.0 296.7" stroke="#8e9094" stroke-width="1"/><path d="M1336.5 297.9 L1340.0 293.7 L1343.5 297.9 Z" fill="#7a7c80"/>
<path d="M1383.3 278.3 L1383.3 302.0" stroke="#8e9094" stroke-width="1"/><path d="M1379.8 303.2 L1383.3 299.0 L1386.8 303.2 Z" fill="#7a7c80"/>
<path d="M1454.3 290.0 L1454.3 309.3" stroke="#8e9094" stroke-width="1"/><path d="M1450.8 310.5 L1454.3 306.3 L1457.8 310.5 Z" fill="#7a7c80"/>
<path d="M1525.0 288.3 L1523.3 312.7" stroke="#8e9094" stroke-width="1"/><path d="M1519.8 313.9 L1523.3 309.7 L1526.8 313.9 Z" fill="#7a7c80"/>
<path d="M1564.3 291.7 L1563.3 316.0" stroke="#8e9094" stroke-width="1"/><path d="M1559.8 317.2 L1563.3 313.0 L1566.8 317.2 Z" fill="#7a7c80"/>
<path d="M1183.3 321.7 L1184.0 346.0" stroke="#8e9094" stroke-width="1"/><path d="M1180.5 347.2 L1184.0 343.0 L1187.5 347.2 Z" fill="#7a7c80"/>
<path d="M1220.0 331.7 L1220.0 352.7" stroke="#8e9094" stroke-width="1"/><path d="M1216.5 353.9 L1220.0 349.7 L1223.5 353.9 Z" fill="#7a7c80"/>
<path d="M1280.0 356.7 L1280.7 390.7" stroke="#8e9094" stroke-width="1"/><path d="M1277.2 391.9 L1280.7 387.7 L1284.2 391.9 Z" fill="#7a7c80"/>
<path d="M1381.7 338.3 L1380.7 356.0" stroke="#8e9094" stroke-width="1"/><path d="M1377.2 357.2 L1380.7 353.0 L1384.2 357.2 Z" fill="#7a7c80"/>
<path d="M1413.3 338.3 L1412.7 372.7" stroke="#8e9094" stroke-width="1"/><path d="M1409.2 373.9 L1412.7 369.7 L1416.2 373.9 Z" fill="#7a7c80"/>
<polygon points="1681.1,87.9 1718.7,82.1 1759.8,86.6 1723.8,94.3" fill="#fff" stroke="#3a3a3a" stroke-width="0.9" stroke-linejoin="round"/>
<polygon points="1681.1,87.9 1723.8,94.3 1723.8,158.3 1686.2,137.0" fill="#fff" stroke="#3a3a3a" stroke-width="0.9" stroke-linejoin="round"/>
<polygon points="1723.8,94.3 1759.8,86.6 1755.1,135.1 1723.8,158.3" fill="#fff" stroke="#3a3a3a" stroke-width="0.9" stroke-linejoin="round"/>
<text transform="matrix(0.53 0.25 0 1 1690.4 120.6)" font-family="Liberation Sans, sans-serif" font-size="15.5" fill="#b4b4b4">Слева</text>
<text transform="matrix(0.5 -0.275 -0.04 1 1733 132.8)" font-family="Liberation Sans, sans-serif" font-size="14.5" fill="#b4b4b4">Сзади</text>
<circle cx="993.1" cy="649.8" r="46.2" fill="#222"/>
<path d="M993.1 650 V629" stroke="#0000ff" stroke-width="2"/><path d="M990.2 630.8 L993.1 621.6 L996 630.8 Z" fill="#0000ff"/>
<path d="M993.1 650 L980 654.6" stroke="#ff0000" stroke-width="2"/><path d="M981.2 651.6 L971.6 657.6 L982.6 658.4 Z" fill="#ff0000"/>
<path d="M993.1 650 L1008 654.2" stroke="#00e000" stroke-width="2"/><path d="M1009 651 L1017.2 657 L1007.4 658 Z" fill="#00e000"/>
<circle cx="993.1" cy="650.1" r="4.4" fill="#a8a8a8"/><circle cx="992" cy="648.8" r="1.6" fill="#d0d0d0"/>
<text x="993.4" y="614.8" font-family="Liberation Sans, sans-serif" font-weight="bold" font-size="9.6" fill="#0000ee">Z</text>
<text x="965.2" y="660.6" font-family="Liberation Sans, sans-serif" font-size="10.4" fill="#ee0000">X</text>
<text x="1023.6" y="658.8" font-family="Liberation Sans, sans-serif" font-weight="bold" font-size="9.8" fill="#00cc00">Y</text>
</svg><!--B1-->

<!-- right toolbar -->
<div id="rt"></div>
<div class="rsep" style="top:129px"></div>
<div class="rsep" style="top:398px"></div>
<div class="rsep" style="top:447px"></div>
<div class="rsep" style="top:628px"></div>
<div class="rsep" style="top:721px"></div>
<div class="ron" style="top:638px"></div>
<div class="ron" style="top:682px"></div>
<svg style="left:1796px;top:0;width:36px;height:783px" viewBox="0 0 36 783" fill="none" stroke="#e0e0e0" stroke-linecap="round" stroke-linejoin="round">
<!-- tree -->
<path d="M14 67.6 H12 Q6.6 67.6 6.6 62.6 Q6.6 58 11.4 57.6 Q12 51.2 18.2 51.2 Q24.4 51.2 25 57.6 Q29.9 58 29.9 62.6 Q29.9 67.6 24.5 67.6 H22.4" stroke-width="1.3"/><path d="M18.25 56.8 V73.6 M18.25 66 L13.2 61.2 M18.25 66.6 L22.8 63.6" stroke-width="1.3"/>
<!-- screen capture -->
<path d="M13.7 110.2 H5.3 V93 H29 V101" stroke-width="1.1" stroke-linecap="butt"/><path d="M10 113 H13.7 V110.4" stroke-width="1.1" stroke-linecap="butt"/>
<path d="M15.2 106.6 V102.6 H19.2 M26.8 102.6 H30.8 V106.6 M30.8 114.4 V118.4 H26.8 M19.2 118.4 H15.2 V114.4" stroke-width="1.1" stroke-linecap="butt"/><polygon points="22.90,115.10 18.92,112.80 18.92,108.20 22.90,105.90 26.88,108.20 26.88,112.80" fill="#e0e0e0" stroke="none"/>
<!-- ruler -->
<rect x="8.4" y="151.2" width="19.2" height="6.2" stroke-width="1" /><path d="M11 157 V154.6 M13.4 157 V153.6 M15.8 157 V154.6 M18.2 157 V153.6 M20.6 157 V154.6 M23 157 V153.6 M25.3 157 V154.6" stroke-width="1" stroke-linecap="butt"/><path d="M8 159.3 H28" stroke-width="1"/>
<path d="M3.8 165.2 V169.1 H7.8 Z" fill="#e0e0e0" stroke="none"/>
<!-- section -->
<path d="M13.1 195.2 H31.2 L23.1 201 H4.8 Z" stroke-width="1"/><path d="M13.1 193.3 L22.9 185.2 V205.1 L13.1 212.6 Z" fill="#e0e0e0" stroke="none"/>
<!-- box section -->
<g stroke-width="1"><rect x="6.3" y="237" width="17.4" height="16.5"/><rect x="12.4" y="232.3" width="17.4" height="16.4"/><path d="M6.3 237 L12.4 232.3 M23.7 237 L29.8 232.3 M6.3 253.5 L12.4 248.7 M23.7 253.5 L29.8 248.7"/></g><path d="M15.4 237.2 L20.2 232.6 V249 L15.4 253.4 Z" fill="#e0e0e0" stroke="none" opacity=".9"/>
<!-- floor plan -->
<path d="M7 297 H31.4 V279.5" stroke-width="1.6" stroke-linecap="butt" opacity=".8"/><path d="M8.4 276.6 H30 V295.4 H4.6 V280.4 Z" stroke-width="1.1"/><path d="M4.6 280.4 H8.4 V276.6" stroke-width="1"/><path d="M16.2 277 V295 M5 285.3 H29.6" stroke-width="1" stroke-dasharray="2.6 1.1" stroke-linecap="butt"/><path d="M22.6 295 V292 H29.6" stroke-width="1.2" stroke-linecap="butt"/>
<!-- target -->
<circle cx="17.9" cy="330.9" r="7.4" stroke-width="2.1"/><circle cx="17.9" cy="330.9" r="3.9" fill="#e0e0e0" stroke="none"/><path d="M17.9 320.4 V323 M17.9 338.8 V341.4 M7.4 330.9 H10 M25.8 330.9 H28.4" stroke-width="2.1"/>
<!-- flag -->
<circle cx="17.9" cy="374.9" r="12.6" stroke-width="1"/><path d="M12.2 381.6 V369 Q14.5 368 16.8 369 Q20.5 370.8 25.8 369.8 V377.4 Q21 378.4 17.5 376.6 Q14.8 375.6 12.2 376.6" stroke-width="1"/>
<!-- grid -->
<path d="M5 427.2 L31.9 412.1 M5.3 436.6 L31.2 421.9 M6.3 422.5 L23.1 432.2 M14.4 416.9 L30.6 426.5" stroke-width="1"/>
<text x="4.6" y="421.2" font-family="Liberation Sans, sans-serif" font-size="5.6" fill="#e0e0e0" stroke="none">1</text><text x="13.8" y="414.6" font-family="Liberation Sans, sans-serif" font-size="5.6" fill="#e0e0e0" stroke="none">2</text>
<!-- dashed cube -->
<rect x="6.2" y="461.4" width="23.6" height="23.2" stroke-width="1" stroke-dasharray="1.5 1.45" stroke-linecap="butt"/><polygon points="17.90,479.30 12.36,476.10 12.36,469.70 17.90,466.50 23.44,469.70 23.44,476.10" stroke="#c4c4c4" stroke-width="1"/><path d="M17.9 472.9 V479.3 M17.9 472.9 L12.4 469.7 M17.9 472.9 L23.4 469.7" stroke="#c4c4c4" stroke-width="1"/>
<!-- dashed eye -->
<rect x="6.2" y="505.4" width="23.6" height="23" stroke-width="1" stroke-dasharray="1.5 1.45" stroke-linecap="butt"/><path d="M10.9 516.9 Q14.5 512.0 18.5 512.0 Q22.5 512.0 26.1 516.9 Q22.5 521.8 18.5 521.8 Q14.5 521.8 10.9 516.9 Z" fill="#e0e0e0" stroke="none"/><circle cx="18.5" cy="516.9" r="2.7" fill="none" stroke="#555" stroke-width="1.3"/><circle cx="18.5" cy="516.9" r="1.5" fill="#e0e0e0" stroke="none"/>
<!-- dashed eye off -->
<rect x="6.2" y="549.2" width="23.6" height="23.4" stroke-width="1" stroke-dasharray="1.5 1.45" stroke-linecap="butt"/><path d="M10.4 560.9 Q14 556.0 18 556.0 Q22 556.0 25.6 560.9 Q22 565.8 18 565.8 Q14 565.8 10.4 560.9 Z" fill="#e0e0e0" stroke="none"/><circle cx="18" cy="560.9" r="2.7" fill="none" stroke="#555" stroke-width="1.3"/><path d="M10.6 554 L24.2 568.2" stroke="#555" stroke-width="2.6"/><path d="M11 554.6 L23.8 567.8" stroke-width="1"/>
<!-- dashed x -->
<path d="M16 616.6 H6.2 V593.5 H29.8 V603" stroke-width="1" stroke-dasharray="1.5 1.45" stroke-linecap="butt"/><rect x="16" y="603.1" width="15.9" height="15.7" fill="#e0e0e0" stroke="none"/><path d="M20.2 607.2 L27.9 614.9 M27.9 607.2 L20.2 614.9" stroke="#333" stroke-width="1.1"/>
</svg>
<svg style="left:1796px;top:0;width:36px;height:783px" viewBox="0 0 36 783" fill="none" stroke="#e0e0e0" stroke-linejoin="round">
<!-- active cube -->
<path d="M8.1 646.1 L16.3 644 L27.7 646.5 L18.5 649.6 Z" fill="#777" stroke-width="1.2"/><path d="M8.1 646.1 L18.5 649.6 V664.6 L9.4 658.4 Z" fill="#e0e0e0" stroke-width="1"/><path d="M18.5 649.6 L27.7 646.5 L26.9 657.8 L18.5 664.6 Z" fill="#707070" stroke-width="1.2"/>
<!-- orbit -->
<ellipse cx="18.1" cy="698.3" rx="11" ry="4.6" stroke-width="1.8"/><ellipse cx="18.1" cy="698.3" rx="4.8" ry="10" stroke-width="1.8"/><path d="M18.1 695.4 V698.4 L15.6 701 M18.1 698.4 L20.6 701" stroke-width="0.8"/>
</svg>

<svg style="left:0;top:0;width:1834px;height:783px;pointer-events:none" viewBox="0 0 1834 783">
<defs><filter id="ash" x="-20%" y="-20%" width="140%" height="160%"><feGaussianBlur stdDeviation="2"/></filter></defs>
<g transform="translate(4.5 4.5)" opacity=".5" filter="url(#ash)"><path d="M234.6 16.7 L106 59.6" stroke="#000" stroke-width="2.2"/><path d="M93.9 63.3 L104.6 52.1 L110 65.7 Z" fill="#000"/></g>
<path d="M234.6 16.7 L106 59.6" stroke="#c00000" stroke-width="2.2"/><path d="M93.9 63.3 L104.6 52.1 L110 65.7 Z" fill="#c00000"/>
</svg>
</body>
</html>
